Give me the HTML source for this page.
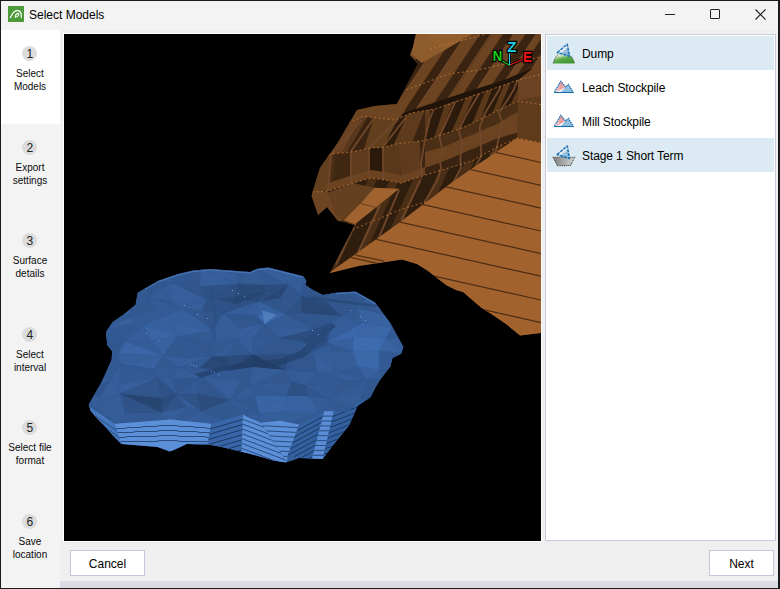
<!DOCTYPE html>
<html><head><meta charset="utf-8">
<style>
*{margin:0;padding:0;box-sizing:border-box;}
html,body{width:780px;height:589px;overflow:hidden;background:#f0f0f0;font-family:"Liberation Sans",sans-serif;}
.abs{position:absolute;}
#win{position:absolute;left:0;top:0;width:780px;height:589px;background:#efefef;}
#title{left:0;top:0;width:780px;height:30px;background:#f3f3f3;}
#ttext{left:29px;top:8px;font-size:12px;line-height:14px;color:#000;}
#side1{left:1px;top:30px;width:59px;height:94px;background:#fff;}
.step{position:absolute;left:2px;width:56px;text-align:center;font-size:10px;line-height:13px;color:#0a0a0a;}
.circ{position:absolute;left:22.3px;width:15px;height:15px;border-radius:50%;background:#dcdcdc;font-size:12px;line-height:16.5px;text-align:center;color:#222;}
#vp{left:64px;top:34px;width:477px;height:507px;background:#000;overflow:hidden;}
#list{left:545px;top:34px;width:231px;height:507px;background:#fff;border:1px solid #c9c9dc;}
.item{position:absolute;left:1px;width:227px;height:34px;font-size:12px;line-height:14px;letter-spacing:-0.1px;color:#000;}
.item.sel{background:#dcebf3;}
.item span{position:absolute;left:35px;top:11px;}
.btn{position:absolute;top:550px;height:26px;background:#fff;border:1px solid #c6c6da;font-size:12px;text-align:center;line-height:24px;padding-top:0.7px;color:#000;}
#strip{left:60px;top:581px;width:718px;height:7px;background:#dadce6;}
</style></head><body>
<svg width="0" height="0" style="position:absolute"><defs>
<linearGradient id="gtri" x1="0" y1="0" x2="0.8" y2="1"><stop offset="0.45" stop-color="#ffffff"/><stop offset="0.7" stop-color="#8cbad8"/></linearGradient>
<linearGradient id="ggreen" x1="0" y1="0" x2="0.6" y2="1"><stop offset="0.2" stop-color="#d8ebc8"/><stop offset="0.55" stop-color="#5aa848"/><stop offset="1" stop-color="#3e9a2e"/></linearGradient>
<linearGradient id="gpink" x1="0" y1="0" x2="1" y2="0"><stop offset="0" stop-color="#fbe6e6"/><stop offset="0.6" stop-color="#e89a9a"/><stop offset="1" stop-color="#eaa8a8"/></linearGradient>
<linearGradient id="ggray" x1="0" y1="0" x2="1" y2="0"><stop offset="0" stop-color="#808080"/><stop offset="0.5" stop-color="#a8a8a8"/><stop offset="1" stop-color="#d8d8d8"/></linearGradient>
</defs></svg>
<div id="win">
<div id="title" class="abs"></div>
<div class="abs" style="left:0;top:0;width:780px;height:1px;background:#1a1a1a"></div>
<svg class="abs" style="left:8px;top:6px" width="16" height="16" viewBox="8 6 16 16"><rect x="8" y="6" width="16" height="16" fill="#4c9a3a"/><path d="M10.4 17.6 Q13.5 11 16.8 10.6 Q20.6 10.3 21.2 14 L21.3 17.6" fill="none" stroke="#fff" stroke-width="1.2" stroke-linecap="round"/><path d="M15.3 17.2 Q15.2 14.2 17.6 13.4 Q19.3 13.4 18.6 15.2 Q17.6 17 15.3 17.2 Z" fill="none" stroke="#fff" stroke-width="1.1"/></svg>
<div id="ttext" class="abs">Select Models</div>
<div class="abs" style="left:665px;top:14px;width:10px;height:1px;background:#222"></div>
<div class="abs" style="left:710px;top:9px;width:10px;height:10px;border:1px solid #222;border-radius:1px"></div>
<svg class="abs" style="left:755px;top:9px" width="11" height="11"><path d="M0.5 0.5L10.5 10.5M10.5 0.5L0.5 10.5" stroke="#222" stroke-width="1.1"/></svg>

<div class="abs" style="left:1px;top:30px;width:59px;height:558px;background:#f3f3f3"></div>
<div id="side1" class="abs"></div>
<div class="abs" style="left:63px;top:33px;width:479px;height:509px;background:#fff"></div>
<div class="circ" style="top:46.0px">1</div>
<div class="step" style="top:67.0px">Select<br>Models</div>
<div class="circ" style="top:139.6px">2</div>
<div class="step" style="top:160.6px">Export<br>settings</div>
<div class="circ" style="top:233.2px">3</div>
<div class="step" style="top:254.2px">Surface<br>details</div>
<div class="circ" style="top:326.8px">4</div>
<div class="step" style="top:347.8px">Select<br>interval</div>
<div class="circ" style="top:420.4px">5</div>
<div class="step" style="top:441.4px">Select file<br>format</div>
<div class="circ" style="top:514.0px">6</div>
<div class="step" style="top:535.0px">Save<br>location</div>

<div id="vp" class="abs"><svg width="477" height="507" viewBox="64 34 477 507" style="position:absolute;left:0;top:0">
<clipPath id="cb"><polygon points="416.0,34.0 541.0,34.0 541.0,333.0 520.0,335.5 506.0,324.0 492.0,314.5 481.0,307.5 463.0,292.0 456.0,290.0 446.0,285.0 428.0,271.0 417.0,264.0 402.0,259.6 358.5,266.0 330.0,273.0 355.0,225.0 338.0,221.0 327.0,207.0 318.0,215.0 311.5,196.0 320.0,168.0 338.0,142.5 350.0,122.0 357.0,110.0 375.0,106.0 397.0,104.0 418.0,64.0 410.0,55.0 413.0,47.0"/></clipPath>
<polygon points="416.0,34.0 541.0,34.0 541.0,333.0 520.0,335.5 506.0,324.0 492.0,314.5 481.0,307.5 463.0,292.0 456.0,290.0 446.0,285.0 428.0,271.0 417.0,264.0 402.0,259.6 358.5,266.0 330.0,273.0 355.0,225.0 338.0,221.0 327.0,207.0 318.0,215.0 311.5,196.0 320.0,168.0 338.0,142.5 350.0,122.0 357.0,110.0 375.0,106.0 397.0,104.0 418.0,64.0 410.0,55.0 413.0,47.0" fill="#5c391b" />
<g clip-path="url(#cb)">
<polygon points="280.0,20.0 560.0,20.0 560.0,69.8 541.0,74.4 518.0,80.0 475.0,95.2 435.6,108.9 412.0,112.8 394.0,120.0 379.9,118.2 363.8,116.4 351.3,121.7 340.0,126.0 280.0,148.8" fill="#6c4421" />
<clipPath id="s4"><polygon points="280.0,20.0 560.0,20.0 560.0,69.8 541.0,74.4 518.0,80.0 475.0,95.2 435.6,108.9 412.0,112.8 394.0,120.0 379.9,118.2 363.8,116.4 351.3,121.7 340.0,126.0 280.0,148.8"/></clipPath>
<g clip-path="url(#s4)">
<polygon points="418.0,20.0 429.0,20.0 242.3,300.0 231.3,300.0" fill="#3a2411" />
<polygon points="442.0,20.0 453.0,20.0 266.3,300.0 255.3,300.0" fill="#3a2411" />
<polygon points="464.8,20.0 475.8,20.0 289.1,300.0 278.1,300.0" fill="#3a2411" />
<polygon points="489.6,20.0 501.6,20.0 314.9,300.0 302.9,300.0" fill="#3a2411" />
<polygon points="512.3,20.0 522.8,20.0 336.1,300.0 325.6,300.0" fill="#3a2411" />
<polygon points="535.0,20.0 545.5,20.0 358.8,300.0 348.3,300.0" fill="#3a2411" />
<polygon points="553.6,20.0 564.1,20.0 377.4,300.0 366.9,300.0" fill="#3a2411" />
<polygon points="578.4,20.0 588.9,20.0 402.2,300.0 391.7,300.0" fill="#3a2411" />
<polygon points="601.0,20.0 611.0,20.0 424.3,300.0 414.3,300.0" fill="#3a2411" />
</g>
<polygon points="400.0,114.0 460.0,94.0 502.6,80.5 541.0,65.0 541.0,72.0 502.6,86.0 475.0,94.5 435.6,108.0 405.0,117.0" fill="#1f130a" />
<polygon points="280.0,148.8 340.0,126.0 351.3,121.7 363.8,116.4 379.9,118.2 394.0,120.0 412.0,112.8 435.6,108.9 475.0,95.2 518.0,80.0 541.0,74.4 560.0,69.8 560.0,107.6 541.0,104.6 518.0,101.0 498.0,110.4 466.3,126.3 425.0,140.5 396.0,144.0 381.6,147.6 372.7,147.6 351.3,152.0 331.7,153.8 320.0,158.0 280.0,172.4" fill="#5a381a" />
<clipPath id="s18"><polygon points="280.0,148.8 340.0,126.0 351.3,121.7 363.8,116.4 379.9,118.2 394.0,120.0 412.0,112.8 435.6,108.9 475.0,95.2 518.0,80.0 541.0,74.4 560.0,69.8 560.0,107.6 541.0,104.6 518.0,101.0 498.0,110.4 466.3,126.3 425.0,140.5 396.0,144.0 381.6,147.6 372.7,147.6 351.3,152.0 331.7,153.8 320.0,158.0 280.0,172.4"/></clipPath>
<g clip-path="url(#s18)">
<polygon points="416.7,20.0 428.7,20.0 264.0,300.0 252.0,300.0" fill="#2f1d0d" />
<polygon points="440.7,20.0 452.7,20.0 288.0,300.0 276.0,300.0" fill="#2f1d0d" />
<polygon points="468.7,20.0 480.7,20.0 316.0,300.0 304.0,300.0" fill="#2f1d0d" />
<polygon points="492.7,20.0 504.7,20.0 340.0,300.0 328.0,300.0" fill="#2f1d0d" />
<polygon points="514.7,20.0 526.7,20.0 362.0,300.0 350.0,300.0" fill="#2f1d0d" />
<polygon points="536.7,20.0 548.7,20.0 384.0,300.0 372.0,300.0" fill="#2f1d0d" />
<polygon points="558.7,20.0 569.7,20.0 405.0,300.0 394.0,300.0" fill="#2f1d0d" />
<polygon points="580.7,20.0 590.7,20.0 426.0,300.0 416.0,300.0" fill="#2f1d0d" />
</g>
<polygon points="280.0,172.4 320.0,158.0 331.7,153.8 351.3,152.0 372.7,147.6 381.6,147.6 396.0,144.0 425.0,140.5 466.3,126.3 498.0,110.4 518.0,101.0 541.0,104.6 560.0,107.6 560.0,147.1 541.0,143.0 518.0,138.0 498.0,146.5 472.0,160.9 443.3,169.5 415.5,178.0 401.3,183.2 388.8,180.6 371.0,178.0 349.6,184.0 328.0,191.3 312.0,192.0 280.0,193.4" fill="#5e3b1c" />
<clipPath id="s30"><polygon points="280.0,172.4 320.0,158.0 331.7,153.8 351.3,152.0 372.7,147.6 381.6,147.6 396.0,144.0 425.0,140.5 466.3,126.3 498.0,110.4 518.0,101.0 541.0,104.6 560.0,107.6 560.0,147.1 541.0,143.0 518.0,138.0 498.0,146.5 472.0,160.9 443.3,169.5 415.5,178.0 401.3,183.2 388.8,180.6 371.0,178.0 349.6,184.0 328.0,191.3 312.0,192.0 280.0,193.4"/></clipPath>
<g clip-path="url(#s30)">
<polygon points="386.2,20.0 400.2,20.0 330.2,300.0 316.2,300.0" fill="#3b2511" />
<polygon points="404.2,20.0 413.2,20.0 343.2,300.0 334.2,300.0" fill="#3b2511" />
<polygon points="434.2,20.0 443.2,20.0 373.2,300.0 364.2,300.0" fill="#3b2511" />
<polygon points="457.2,20.0 466.2,20.0 396.2,300.0 387.2,300.0" fill="#3b2511" />
<polygon points="477.2,20.0 486.2,20.0 416.2,300.0 407.2,300.0" fill="#3b2511" />
<polygon points="497.2,20.0 506.2,20.0 436.2,300.0 427.2,300.0" fill="#3b2511" />
<polygon points="517.2,20.0 526.2,20.0 456.2,300.0 447.2,300.0" fill="#3b2511" />
<polygon points="536.2,20.0 545.2,20.0 475.2,300.0 466.2,300.0" fill="#3b2511" />
</g>
<clipPath id="clobe"><polygon points="280.0,20.0 425.0,20.0 425.0,300.0 280.0,300.0"/></clipPath>
<g clip-path="url(#clobe)">
<polygon points="300.0,141.2 362.0,117.2 342.0,152.9 300.0,165.2" fill="#6a4221" />
<polygon points="362.0,117.2 368.0,116.9 347.0,152.4 342.0,152.9" fill="#5a381b" />
<polygon points="368.0,116.9 374.0,117.5 364.0,149.4 347.0,152.4" fill="#3a2411" />
<polygon points="374.0,117.5 398.4,118.2 383.1,147.2 364.0,149.4" fill="#62401d" />
<polygon points="398.4,118.2 407.6,114.6 393.8,144.6 383.1,147.2" fill="#2e1c0c" />
<polygon points="407.6,114.6 425.0,110.7 412.2,142.0 393.8,144.6" fill="#5e3b1c" />
<polygon points="425.0,110.7 440.0,107.4 425.0,140.5 412.2,142.0" fill="#3a2411" />
<polygon points="300.0,165.2 331.0,154.1 328.0,191.3 300.0,192.5" fill="#62401e" />
<polygon points="331.0,154.1 335.0,153.5 332.0,189.9 328.0,191.3" fill="#4a2e15" />
<polygon points="335.0,153.5 351.0,152.0 351.0,183.6 332.0,189.9" fill="#3f2712" />
<polygon points="351.0,152.0 369.0,148.4 369.0,178.6 351.0,183.6" fill="#5e3b1c" />
<polygon points="369.0,148.4 383.0,147.2 383.0,179.8 369.0,178.6" fill="#2a1a0b" />
<polygon points="383.0,147.2 398.4,143.7 401.5,183.1 383.0,179.8" fill="#5a381b" />
<polygon points="398.4,143.7 419.8,141.1 421.3,176.2 401.5,183.1" fill="#5e3b1c" />
<polygon points="419.8,141.1 440.0,135.3 440.0,170.5 421.3,176.2" fill="#3a2411" />
</g>
<clipPath id="cledge"><polygon points="326.0,20.0 425.0,20.0 425.0,300.0 326.0,300.0"/></clipPath>
<g clip-path="url(#cledge)">
<polygon points="280.0,185.4 312.0,184.0 328.0,183.3 349.6,176.0 371.0,170.0 388.8,172.6 401.3,175.2 415.5,170.0 443.3,161.5 472.0,152.9 498.0,138.5 518.0,130.0 541.0,135.0 560.0,139.1 560.0,147.1 541.0,143.0 518.0,138.0 498.0,146.5 472.0,160.9 443.3,169.5 415.5,178.0 401.3,183.2 388.8,180.6 371.0,178.0 349.6,184.0 328.0,191.3 312.0,192.0 280.0,193.4" fill="#6b4321" />
</g>
<clipPath id="cright"><polygon points="425.0,20.0 560.0,20.0 560.0,300.0 425.0,300.0"/></clipPath>
<g clip-path="url(#cright)">
<polygon points="409.0,114.0 422.6,111.0 417.4,141.4 405.0,142.9" fill="#2c1b0c" />
<polygon points="422.6,111.0 431.0,109.7 425.0,140.5 417.4,141.4" fill="#5a3819" />
<polygon points="431.0,109.7 444.6,105.8 434.3,137.3 425.0,140.5" fill="#2c1b0c" />
<polygon points="444.6,105.8 453.0,102.8 440.0,135.3 434.3,137.3" fill="#5a3819" />
<polygon points="453.0,102.8 466.0,98.3 451.8,131.3 440.0,135.3" fill="#2c1b0c" />
<polygon points="466.0,98.3 474.0,95.5 459.0,128.8 451.8,131.3" fill="#5a3819" />
<polygon points="474.0,95.5 485.2,91.6 472.6,123.1 459.0,128.8" fill="#2c1b0c" />
<polygon points="485.2,91.6 492.0,89.2 481.0,118.9 472.6,123.1" fill="#5a3819" />
<polygon points="492.0,89.2 503.8,85.0 492.2,113.3 481.0,118.9" fill="#2c1b0c" />
<polygon points="503.8,85.0 511.0,82.5 499.0,109.9 492.2,113.3" fill="#5a3819" />
<polygon points="511.0,82.5 522.8,78.8 510.2,104.7 499.0,109.9" fill="#2c1b0c" />
<polygon points="522.8,78.8 530.0,77.1 517.0,101.5 510.2,104.7" fill="#5a3819" />
<polygon points="530.0,77.1 542.4,74.1 529.4,102.8 517.0,101.5" fill="#2c1b0c" />
<polygon points="542.4,74.1 550.0,72.2 537.0,104.0 529.4,102.8" fill="#5a3819" />
<polygon points="280.0,172.4 320.0,158.0 331.7,153.8 351.3,152.0 372.7,147.6 381.6,147.6 396.0,144.0 425.0,140.5 466.3,126.3 498.0,110.4 518.0,101.0 541.0,104.6 560.0,107.6 560.0,100.0 516.2,112.4 495.6,124.8 442.0,147.5 400.6,157.8 380.0,163.0" fill="#4a2e15" />
<polygon points="380.0,163.0 400.6,157.8 442.0,147.5 495.6,124.8 516.2,112.4 560.0,100.0 560.0,125.0 516.2,133.0 495.6,139.2 442.0,162.0 400.6,176.4 380.0,182.0" fill="#6b4321" />
<polygon points="380.0,182.0 400.6,176.4 442.0,162.0 495.6,139.2 516.2,133.0 560.0,125.0 560.0,147.1 541.0,143.0 518.0,138.0 498.0,146.5 472.0,160.9 443.3,169.5 415.5,178.0 401.3,183.2 388.8,180.6 371.0,178.0 349.6,184.0 328.0,191.3 312.0,192.0 280.0,193.4" fill="#3a2411" />
</g>
<polygon points="280.0,193.4 312.0,192.0 328.0,191.3 349.6,184.0 371.0,178.0 388.8,180.6 401.3,183.2 415.5,178.0 443.3,169.5 472.0,160.9 498.0,146.5 518.0,138.0 541.0,143.0 560.0,147.1 560.0,146.0 541.0,143.0 517.0,138.0 455.0,180.0 401.2,221.3 330.0,272.3 280.0,308.0" fill="#2f1d0d" />
<clipPath id="s84"><polygon points="280.0,193.4 312.0,192.0 328.0,191.3 349.6,184.0 371.0,178.0 388.8,180.6 401.3,183.2 415.5,178.0 443.3,169.5 472.0,160.9 498.0,146.5 518.0,138.0 541.0,143.0 560.0,147.1 560.0,146.0 541.0,143.0 517.0,138.0 455.0,180.0 401.2,221.3 330.0,272.3 280.0,308.0"/></clipPath>
<g clip-path="url(#s84)">
<polygon points="440.5,20.0 449.5,20.0 322.2,300.0 313.2,300.0" fill="#4a2e15" />
<polygon points="462.5,20.0 471.5,20.0 344.2,300.0 335.2,300.0" fill="#4a2e15" />
<polygon points="485.5,20.0 494.5,20.0 367.2,300.0 358.2,300.0" fill="#4a2e15" />
<polygon points="507.5,20.0 516.5,20.0 389.2,300.0 380.2,300.0" fill="#4a2e15" />
<polygon points="529.5,20.0 538.5,20.0 411.2,300.0 402.2,300.0" fill="#4a2e15" />
<polygon points="551.5,20.0 560.5,20.0 433.2,300.0 424.2,300.0" fill="#4a2e15" />
<polygon points="573.5,20.0 582.5,20.0 455.2,300.0 446.2,300.0" fill="#4a2e15" />
<polygon points="595.5,20.0 604.5,20.0 477.2,300.0 468.2,300.0" fill="#4a2e15" />
</g>
<clipPath id="ccol"><polygon points="280.0,148.8 340.0,126.0 351.3,121.7 363.8,116.4 379.9,118.2 394.0,120.0 412.0,112.8 435.6,108.9 475.0,95.2 518.0,80.0 541.0,74.4 560.0,69.8 560.0,146.0 541.0,143.0 517.0,138.0 455.0,180.0 401.2,221.3 330.0,272.3 280.0,308.0"/></clipPath>
<g clip-path="url(#ccol)">
<polyline points="335.8,264.6 355.0,224.2" fill="none" stroke="#70472a" stroke-width="1.8" />
<polyline points="357.0,255.0 380.0,205.0" fill="none" stroke="#70472a" stroke-width="1.8" />
<polyline points="378.0,239.6 399.2,189.6" fill="none" stroke="#70472a" stroke-width="1.8" />
<polyline points="401.2,220.4 420.4,180.0" fill="none" stroke="#70472a" stroke-width="1.8" />
<polyline points="424.2,203.0 437.7,180.0" fill="none" stroke="#70472a" stroke-width="1.8" />
<polyline points="421.6,175.0 421.0,164.0 424.8,140.0 429.7,119.0 439.4,96.5 450.0,70.0" fill="none" stroke="#70472a" stroke-width="1.8" />
<polyline points="437.7,180.0 441.0,168.0 439.4,157.7 442.6,151.3 439.4,136.8 449.0,115.8 457.0,98.0 462.0,90.0 472.0,60.0" fill="none" stroke="#70472a" stroke-width="1.8" />
<polyline points="452.0,185.0 461.0,168.0 460.3,157.7 462.0,143.2 458.7,130.3 466.8,114.2 476.5,98.0 481.3,90.0 492.0,60.0" fill="none" stroke="#70472a" stroke-width="1.8" />
<polyline points="473.2,170.6 481.3,156.0 479.7,127.1 484.5,114.2 494.2,98.0 499.0,90.0 510.0,60.0" fill="none" stroke="#70472a" stroke-width="1.8" />
<polyline points="490.0,155.0 495.8,151.3 502.3,122.3 499.0,112.6 508.7,98.0 513.5,90.0 525.0,62.0" fill="none" stroke="#70472a" stroke-width="1.8" />
<polyline points="362.0,120.0 331.0,155.0 328.0,191.0" fill="none" stroke="#70472a" stroke-width="1.8" />
<polyline points="374.0,118.0 351.0,151.0 351.0,183.0" fill="none" stroke="#70472a" stroke-width="1.8" />
<polyline points="398.4,119.0 369.0,148.0 369.0,177.0" fill="none" stroke="#70472a" stroke-width="1.8" />
<polyline points="407.0,116.0 383.0,147.0 383.0,180.0" fill="none" stroke="#70472a" stroke-width="1.8" />
</g>
<clipPath id="cr01"><polygon points="280.0,20.0 560.0,20.0 560.0,57.0 541.0,65.0 502.6,80.5 460.0,94.0 400.0,114.0 280.0,130.0"/></clipPath>
<g clip-path="url(#cr01)">
<polyline points="429.0,20.0 342.3,150.0" fill="none" stroke="#74492a" stroke-width="1.2" />
<polyline points="453.0,20.0 366.3,150.0" fill="none" stroke="#74492a" stroke-width="1.2" />
<polyline points="475.8,20.0 389.1,150.0" fill="none" stroke="#74492a" stroke-width="1.2" />
<polyline points="500.6,20.0 413.9,150.0" fill="none" stroke="#74492a" stroke-width="1.2" />
<polyline points="523.3,20.0 436.6,150.0" fill="none" stroke="#74492a" stroke-width="1.2" />
<polyline points="546.0,20.0 459.3,150.0" fill="none" stroke="#74492a" stroke-width="1.2" />
<polyline points="564.6,20.0 477.9,150.0" fill="none" stroke="#74492a" stroke-width="1.2" />
<polyline points="589.4,20.0 502.7,150.0" fill="none" stroke="#74492a" stroke-width="1.2" />
<polyline points="612.0,20.0 525.3,150.0" fill="none" stroke="#74492a" stroke-width="1.2" />
</g>
<polygon points="350.0,122.0 357.0,110.0 375.0,106.0 397.0,104.0 412.0,92.0 404.0,112.8 394.0,120.0 379.9,118.2 363.8,116.4 351.3,121.7 340.0,126.0" fill="#6e4522" />
<polygon points="343.5,220.4 358.8,203.0 374.2,187.7 399.2,188.7 355.0,224.2" fill="#a0632f" />
<polygon points="358.8,203.0 378.0,208.0" fill="#5a3719" />
<polyline points="358.8,203.0 378.0,208.0" fill="none" stroke="#6a4220" stroke-width="1" />
<polygon points="328.8,192.4 352.5,183.0 374.2,187.7 362.0,202.0 343.5,220.4 336.0,214.0" fill="#654020" />
<polygon points="318.0,215.0 311.5,196.0 312.0,190.0 328.8,192.4 336.0,214.0 343.5,220.4 338.0,221.0" fill="#6e4523" />
<clipPath id="cf"><polygon points="330.0,272.3 401.2,221.3 455.0,180.0 517.0,138.0 541.0,143.0 541.0,340.0 300.0,340.0"/></clipPath>
<polygon points="330.0,272.3 401.2,221.3 455.0,180.0 517.0,138.0 541.0,143.0 541.0,340.0 300.0,340.0" fill="#a2622e" />
<g clip-path="url(#cf)">
<polyline points="300.0,108.6 541.0,162.5" fill="none" stroke="#4c2d13" stroke-width="1.2" />
<polyline points="300.0,131.4 541.0,185.3" fill="none" stroke="#4c2d13" stroke-width="1.2" />
<polyline points="300.0,154.2 541.0,208.1" fill="none" stroke="#4c2d13" stroke-width="1.2" />
<polyline points="300.0,177.1 541.0,231.0" fill="none" stroke="#4c2d13" stroke-width="1.2" />
<polyline points="300.0,199.7 541.0,253.6" fill="none" stroke="#4c2d13" stroke-width="1.2" />
<polyline points="300.0,222.3 541.0,276.2" fill="none" stroke="#4c2d13" stroke-width="1.2" />
<polyline points="300.0,246.1 541.0,300.0" fill="none" stroke="#4c2d13" stroke-width="1.2" />
<polyline points="300.0,268.7 541.0,322.6" fill="none" stroke="#4c2d13" stroke-width="1.2" />
<polyline points="355.0,255.0 384.0,261.0" fill="none" stroke="#5e3919" stroke-width="1.3" />
</g>
<polygon points="518.0,101.0 541.0,96.0 541.0,143.0 517.0,138.0" fill="#5e3b1b" />
<polygon points="518.0,80.0 541.0,62.0 541.0,96.0 518.0,101.0" fill="#6b4322" />
<polygon points="414.0,34.0 472.0,34.0 443.0,51.0 421.8,63.0 411.0,54.0 413.0,47.0" fill="#8d5b2c" />
<polygon points="425.0,34.0 472.0,34.0 443.0,50.8" fill="#966030" opacity="0.6"/>
<polyline points="398.0,93.0 449.3,73.8 475.0,70.7 500.0,65.0 541.0,57.0" fill="none" stroke="#c07b3c" stroke-width="1" stroke-dasharray="2 2.5" opacity="0.8"/>
<polyline points="340.0,126.0 351.3,121.7 363.8,116.4 379.9,118.2 394.0,120.0 412.0,112.8 435.6,108.9 475.0,95.2 518.0,80.0 541.0,74.4" fill="none" stroke="#c07b3c" stroke-width="1" stroke-dasharray="2 2.5" opacity="0.8"/>
<polyline points="320.0,158.0 331.7,153.8 351.3,152.0 372.7,147.6 381.6,147.6 396.0,144.0 425.0,140.5 466.3,126.3 498.0,110.4 518.0,101.0 541.0,104.6" fill="none" stroke="#c07b3c" stroke-width="1" stroke-dasharray="2 2.5" opacity="0.8"/>
<polyline points="312.0,192.0 328.0,191.3 349.6,184.0 371.0,178.0 388.8,180.6 401.3,183.2 415.5,178.0 443.3,169.5 472.0,160.9 498.0,146.5 518.0,138.0 541.0,143.0" fill="none" stroke="#c07b3c" stroke-width="1" stroke-dasharray="2 2.5" opacity="0.8"/>
<polyline points="345.0,234.0 354.4,228.8 401.6,209.2 426.0,202.0" fill="none" stroke="#c07b3c" stroke-width="1" stroke-dasharray="2 2.5" opacity="0.8"/>
<polyline points="430.0,49.0 475.0,37.0 500.0,30.0" fill="none" stroke="#c07b3c" stroke-width="1" stroke-dasharray="2 2.5" opacity="0.8"/>
</g>
<clipPath id="cbl"><polygon points="210.7,269.0 250.0,272.0 257.4,268.7 268.3,267.6 303.2,276.3 306.4,280.7 305.4,285.0 312.0,289.4 322.8,294.9 335.9,292.7 355.5,291.6 375.0,302.5 390.3,323.0 396.9,335.2 403.4,347.0 401.2,353.7 392.5,358.0 390.3,366.8 385.0,373.3 379.4,380.7 375.0,388.3 370.7,397.0 357.6,405.8 349.0,425.4 340.2,436.3 331.5,447.1 322.8,459.1 298.8,458.0 285.8,462.4 272.7,460.2 250.0,453.7 221.6,447.0 210.7,445.0 186.8,443.9 172.6,450.4 169.3,451.5 157.3,447.1 121.4,443.9 112.7,435.2 106.1,427.5 97.4,418.8 90.9,411.2 88.7,404.7 94.2,394.9 101.8,381.8 111.6,360.0 112.2,351.5 107.2,345.0 106.0,332.0 112.7,322.0 123.6,314.5 135.6,304.7 137.7,292.7 145.4,288.3 158.4,280.7 178.0,274.0 193.3,270.5"/></clipPath>
<polygon points="210.7,269.0 250.0,272.0 257.4,268.7 268.3,267.6 303.2,276.3 306.4,280.7 305.4,285.0 312.0,289.4 322.8,294.9 335.9,292.7 355.5,291.6 375.0,302.5 390.3,323.0 396.9,335.2 403.4,347.0 401.2,353.7 392.5,358.0 390.3,366.8 385.0,373.3 379.4,380.7 375.0,388.3 370.7,397.0 357.6,405.8 349.0,425.4 340.2,436.3 331.5,447.1 322.8,459.1 298.8,458.0 285.8,462.4 272.7,460.2 250.0,453.7 221.6,447.0 210.7,445.0 186.8,443.9 172.6,450.4 169.3,451.5 157.3,447.1 121.4,443.9 112.7,435.2 106.1,427.5 97.4,418.8 90.9,411.2 88.7,404.7 94.2,394.9 101.8,381.8 111.6,360.0 112.2,351.5 107.2,345.0 106.0,332.0 112.7,322.0 123.6,314.5 135.6,304.7 137.7,292.7 145.4,288.3 158.4,280.7 178.0,274.0 193.3,270.5" fill="#3862a0" />
<g clip-path="url(#cbl)">
<polygon points="72.5,252.9 103.0,252.1 93.2,267.4" fill="#345c97" stroke="#31568d" stroke-width="0.3"/>
<polygon points="72.5,252.9 93.2,267.4 79.0,266.2" fill="#355d98" stroke="#325890" stroke-width="0.3"/>
<polygon points="79.0,266.2 93.2,267.4 76.7,282.8" fill="#31568d" stroke="#325891" stroke-width="0.3"/>
<polygon points="93.2,267.4 105.6,283.3 76.7,282.8" fill="#355d98" stroke="#325890" stroke-width="0.3"/>
<polygon points="76.7,282.8 105.6,283.3 98.3,298.8" fill="#355d98" stroke="#365f9c" stroke-width="0.3"/>
<polygon points="76.7,282.8 98.3,298.8 67.2,298.1" fill="#345b94" stroke="#335992" stroke-width="0.3"/>
<polygon points="67.2,298.1 98.3,298.8 66.7,311.4" fill="#335a94" stroke="#355c97" stroke-width="0.3"/>
<polygon points="98.3,298.8 101.1,310.2 66.7,311.4" fill="#355d99" stroke="#345c96" stroke-width="0.3"/>
<polygon points="66.7,311.4 101.1,310.2 107.9,327.8" fill="#345c97" stroke="#31568e" stroke-width="0.3"/>
<polygon points="66.7,311.4 107.9,327.8 67.4,322.3" fill="#32578f" stroke="#325890" stroke-width="0.3"/>
<polygon points="67.4,322.3 107.9,327.8 74.5,342.9" fill="#355d98" stroke="#325991" stroke-width="0.3"/>
<polygon points="107.9,327.8 96.9,340.7 74.5,342.9" fill="#345b95" stroke="#31568c" stroke-width="0.3"/>
<polygon points="74.5,342.9 96.9,340.7 102.5,357.4" fill="#31568d" stroke="#325891" stroke-width="0.3"/>
<polygon points="74.5,342.9 102.5,357.4 68.5,351.5" fill="#355c97" stroke="#355d97" stroke-width="0.3"/>
<polygon points="68.5,351.5 102.5,357.4 78.5,372.0" fill="#355c97" stroke="#325991" stroke-width="0.3"/>
<polygon points="102.5,357.4 106.6,366.1 78.5,372.0" fill="#345b95" stroke="#335a94" stroke-width="0.3"/>
<polygon points="78.5,372.0 106.6,366.1 111.6,378.6" fill="#335a94" stroke="#31578e" stroke-width="0.3"/>
<polygon points="78.5,372.0 111.6,378.6 77.5,381.1" fill="#365e9b" stroke="#32588f" stroke-width="0.3"/>
<polygon points="77.5,381.1 111.6,378.6 85.5,391.9" fill="#365f9c" stroke="#365f9b" stroke-width="0.3"/>
<polygon points="111.6,378.6 100.4,398.3 85.5,391.9" fill="#31568d" stroke="#335a94" stroke-width="0.3"/>
<polygon points="85.5,391.9 100.4,398.3 95.0,409.9" fill="#355e99" stroke="#365f9c" stroke-width="0.3"/>
<polygon points="85.5,391.9 95.0,409.9 83.2,408.1" fill="#335a93" stroke="#325891" stroke-width="0.3"/>
<polygon points="83.2,408.1 95.0,409.9 68.9,420.6" fill="#325890" stroke="#365f9b" stroke-width="0.3"/>
<polygon points="95.0,409.9 92.8,425.5 68.9,420.6" fill="#325890" stroke="#345b96" stroke-width="0.3"/>
<polygon points="68.9,420.6 92.8,425.5 107.3,438.7" fill="#32578f" stroke="#345b95" stroke-width="0.3"/>
<polygon points="68.9,420.6 107.3,438.7 72.2,440.8" fill="#365f9c" stroke="#32578e" stroke-width="0.3"/>
<polygon points="72.2,440.8 107.3,438.7 69.6,452.7" fill="#355e99" stroke="#345b94" stroke-width="0.3"/>
<polygon points="107.3,438.7 109.5,450.3 69.6,452.7" fill="#365e9a" stroke="#355d98" stroke-width="0.3"/>
<polygon points="69.6,452.7 109.5,450.3 105.9,466.8" fill="#325890" stroke="#365f9b" stroke-width="0.3"/>
<polygon points="69.6,452.7 105.9,466.8 78.8,464.9" fill="#345b94" stroke="#31568d" stroke-width="0.3"/>
<polygon points="103.0,252.1 129.6,255.6 93.2,267.4" fill="#31568c" stroke="#345b94" stroke-width="0.3"/>
<polygon points="129.6,255.6 134.8,274.0 93.2,267.4" fill="#335a94" stroke="#325991" stroke-width="0.3"/>
<polygon points="93.2,267.4 134.8,274.0 127.5,285.5" fill="#32578f" stroke="#335992" stroke-width="0.3"/>
<polygon points="93.2,267.4 127.5,285.5 105.6,283.3" fill="#335991" stroke="#355e9a" stroke-width="0.3"/>
<polygon points="105.6,283.3 127.5,285.5 98.3,298.8" fill="#31568c" stroke="#355d98" stroke-width="0.3"/>
<polygon points="127.5,285.5 119.2,299.8 98.3,298.8" fill="#355e9a" stroke="#31578e" stroke-width="0.3"/>
<polygon points="98.3,298.8 119.2,299.8 130.9,316.4" fill="#365f9b" stroke="#355d98" stroke-width="0.3"/>
<polygon points="98.3,298.8 130.9,316.4 101.1,310.2" fill="#365f9b" stroke="#325991" stroke-width="0.3"/>
<polygon points="101.1,310.2 130.9,316.4 107.9,327.8" fill="#335992" stroke="#335a93" stroke-width="0.3"/>
<polygon points="130.9,316.4 134.4,324.1 107.9,327.8" fill="#36609c" stroke="#345c96" stroke-width="0.3"/>
<polygon points="107.9,327.8 134.4,324.1 125.7,341.5" fill="#335992" stroke="#335a93" stroke-width="0.3"/>
<polygon points="107.9,327.8 125.7,341.5 96.9,340.7" fill="#325891" stroke="#31568d" stroke-width="0.3"/>
<polygon points="96.9,340.7 125.7,341.5 102.5,357.4" fill="#31578e" stroke="#355e9a" stroke-width="0.3"/>
<polygon points="125.7,341.5 118.5,353.7 102.5,357.4" fill="#335991" stroke="#365f9c" stroke-width="0.3"/>
<polygon points="102.5,357.4 118.5,353.7 121.4,364.6" fill="#325890" stroke="#325891" stroke-width="0.3"/>
<polygon points="102.5,357.4 121.4,364.6 106.6,366.1" fill="#345b94" stroke="#32588f" stroke-width="0.3"/>
<polygon points="106.6,366.1 121.4,364.6 111.6,378.6" fill="#335992" stroke="#365f9c" stroke-width="0.3"/>
<polygon points="121.4,364.6 119.2,384.4 111.6,378.6" fill="#365e9a" stroke="#355e99" stroke-width="0.3"/>
<polygon points="111.6,378.6 119.2,384.4 120.6,393.7" fill="#345c96" stroke="#365f9b" stroke-width="0.3"/>
<polygon points="111.6,378.6 120.6,393.7 100.4,398.3" fill="#365f9b" stroke="#345b95" stroke-width="0.3"/>
<polygon points="100.4,398.3 120.6,393.7 95.0,409.9" fill="#355d98" stroke="#31568d" stroke-width="0.3"/>
<polygon points="120.6,393.7 125.8,413.3 95.0,409.9" fill="#355d98" stroke="#335a93" stroke-width="0.3"/>
<polygon points="95.0,409.9 125.8,413.3 119.6,423.5" fill="#355d98" stroke="#345c97" stroke-width="0.3"/>
<polygon points="95.0,409.9 119.6,423.5 92.8,425.5" fill="#325991" stroke="#31568d" stroke-width="0.3"/>
<polygon points="92.8,425.5 119.6,423.5 107.3,438.7" fill="#365f9b" stroke="#31578e" stroke-width="0.3"/>
<polygon points="119.6,423.5 129.0,441.5 107.3,438.7" fill="#335a94" stroke="#335992" stroke-width="0.3"/>
<polygon points="107.3,438.7 129.0,441.5 134.4,455.3" fill="#325991" stroke="#355d98" stroke-width="0.3"/>
<polygon points="107.3,438.7 134.4,455.3 109.5,450.3" fill="#365f9c" stroke="#325890" stroke-width="0.3"/>
<polygon points="109.5,450.3 134.4,455.3 105.9,466.8" fill="#345c97" stroke="#325991" stroke-width="0.3"/>
<polygon points="134.4,455.3 123.6,465.2 105.9,466.8" fill="#345b95" stroke="#335a93" stroke-width="0.3"/>
<polygon points="129.6,255.6 151.2,259.5 163.2,266.9" fill="#32578f" stroke="#32578f" stroke-width="0.3"/>
<polygon points="129.6,255.6 163.2,266.9 134.8,274.0" fill="#325890" stroke="#365f9b" stroke-width="0.3"/>
<polygon points="134.8,274.0 163.2,266.9 127.5,285.5" fill="#345b94" stroke="#325890" stroke-width="0.3"/>
<polygon points="163.2,266.9 147.5,281.6 127.5,285.5" fill="#365f9b" stroke="#36609c" stroke-width="0.3"/>
<polygon points="127.5,285.5 147.5,281.6 148.7,297.9" fill="#335a93" stroke="#32578f" stroke-width="0.3"/>
<polygon points="127.5,285.5 148.7,297.9 119.2,299.8" fill="#32588f" stroke="#31578e" stroke-width="0.3"/>
<polygon points="119.2,299.8 148.7,297.9 130.9,316.4" fill="#335992" stroke="#31578e" stroke-width="0.3"/>
<polygon points="148.7,297.9 155.8,309.9 130.9,316.4" fill="#325890" stroke="#325890" stroke-width="0.3"/>
<polygon points="130.9,316.4 155.8,309.9 144.1,325.3" fill="#345b95" stroke="#365e9a" stroke-width="0.3"/>
<polygon points="130.9,316.4 144.1,325.3 134.4,324.1" fill="#355d98" stroke="#335a93" stroke-width="0.3"/>
<polygon points="134.4,324.1 144.1,325.3 125.7,341.5" fill="#335a93" stroke="#345b95" stroke-width="0.3"/>
<polygon points="144.1,325.3 151.4,340.6 125.7,341.5" fill="#355e9a" stroke="#355e99" stroke-width="0.3"/>
<polygon points="125.7,341.5 151.4,340.6 163.1,355.7" fill="#345c96" stroke="#365e9a" stroke-width="0.3"/>
<polygon points="125.7,341.5 163.1,355.7 118.5,353.7" fill="#3a65a6" stroke="#355d98" stroke-width="0.3"/>
<polygon points="118.5,353.7 163.1,355.7 121.4,364.6" fill="#36609c" stroke="#37619e" stroke-width="0.3"/>
<polygon points="163.1,355.7 154.3,369.1 121.4,364.6" fill="#37619f" stroke="#345b95" stroke-width="0.3"/>
<polygon points="121.4,364.6 154.3,369.1 157.5,378.0" fill="#325891" stroke="#325890" stroke-width="0.3"/>
<polygon points="121.4,364.6 157.5,378.0 119.2,384.4" fill="#335a93" stroke="#335a93" stroke-width="0.3"/>
<polygon points="119.2,384.4 157.5,378.0 120.6,393.7" fill="#365f9c" stroke="#365e9a" stroke-width="0.3"/>
<polygon points="157.5,378.0 162.0,398.5 120.6,393.7" fill="#31568c" stroke="#2c4d7f" stroke-width="0.3"/>
<polygon points="120.6,393.7 162.0,398.5 161.5,412.7" fill="#274571" stroke="#2b4c7c" stroke-width="0.3"/>
<polygon points="120.6,393.7 161.5,412.7 125.8,413.3" fill="#2f5388" stroke="#2d4f81" stroke-width="0.3"/>
<polygon points="125.8,413.3 161.5,412.7 119.6,423.5" fill="#345b96" stroke="#31568c" stroke-width="0.3"/>
<polygon points="161.5,412.7 151.8,423.1 119.6,423.5" fill="#335a93" stroke="#365f9b" stroke-width="0.3"/>
<polygon points="119.6,423.5 151.8,423.1 146.1,439.2" fill="#355e9a" stroke="#365e9a" stroke-width="0.3"/>
<polygon points="119.6,423.5 146.1,439.2 129.0,441.5" fill="#365f9c" stroke="#325890" stroke-width="0.3"/>
<polygon points="129.0,441.5 146.1,439.2 134.4,455.3" fill="#31578e" stroke="#32578f" stroke-width="0.3"/>
<polygon points="146.1,439.2 145.2,448.1 134.4,455.3" fill="#345b95" stroke="#355c97" stroke-width="0.3"/>
<polygon points="134.4,455.3 145.2,448.1 148.2,463.0" fill="#365f9b" stroke="#355d98" stroke-width="0.3"/>
<polygon points="134.4,455.3 148.2,463.0 123.6,465.2" fill="#345c97" stroke="#355d99" stroke-width="0.3"/>
<polygon points="151.2,259.5 176.8,252.0 163.2,266.9" fill="#335a94" stroke="#345b95" stroke-width="0.3"/>
<polygon points="176.8,252.0 170.0,266.9 163.2,266.9" fill="#31568d" stroke="#355d99" stroke-width="0.3"/>
<polygon points="163.2,266.9 170.0,266.9 172.0,282.8" fill="#325890" stroke="#365f9b" stroke-width="0.3"/>
<polygon points="163.2,266.9 172.0,282.8 147.5,281.6" fill="#345c97" stroke="#325991" stroke-width="0.3"/>
<polygon points="147.5,281.6 172.0,282.8 148.7,297.9" fill="#31578e" stroke="#325890" stroke-width="0.3"/>
<polygon points="172.0,282.8 170.5,301.4 148.7,297.9" fill="#345c96" stroke="#355d97" stroke-width="0.3"/>
<polygon points="148.7,297.9 170.5,301.4 182.3,308.8" fill="#31578e" stroke="#31568d" stroke-width="0.3"/>
<polygon points="148.7,297.9 182.3,308.8 155.8,309.9" fill="#345b95" stroke="#345b96" stroke-width="0.3"/>
<polygon points="155.8,309.9 182.3,308.8 144.1,325.3" fill="#345b95" stroke="#335a92" stroke-width="0.3"/>
<polygon points="182.3,308.8 175.0,324.6 144.1,325.3" fill="#37619e" stroke="#345b95" stroke-width="0.3"/>
<polygon points="144.1,325.3 175.0,324.6 177.3,336.6" fill="#37609e" stroke="#3862a0" stroke-width="0.3"/>
<polygon points="144.1,325.3 177.3,336.6 151.4,340.6" fill="#3a66a6" stroke="#3862a1" stroke-width="0.3"/>
<polygon points="151.4,340.6 177.3,336.6 163.1,355.7" fill="#37619f" stroke="#355d98" stroke-width="0.3"/>
<polygon points="177.3,336.6 187.0,358.4 163.1,355.7" fill="#325890" stroke="#325890" stroke-width="0.3"/>
<polygon points="163.1,355.7 187.0,358.4 179.3,367.9" fill="#365f9c" stroke="#355d98" stroke-width="0.3"/>
<polygon points="163.1,355.7 179.3,367.9 154.3,369.1" fill="#335991" stroke="#31568d" stroke-width="0.3"/>
<polygon points="154.3,369.1 179.3,367.9 157.5,378.0" fill="#345b94" stroke="#355c97" stroke-width="0.3"/>
<polygon points="179.3,367.9 171.7,378.4 157.5,378.0" fill="#335a93" stroke="#325890" stroke-width="0.3"/>
<polygon points="157.5,378.0 171.7,378.4 176.9,393.9" fill="#355c97" stroke="#365f9b" stroke-width="0.3"/>
<polygon points="157.5,378.0 176.9,393.9 162.0,398.5" fill="#2f5286" stroke="#2d5083" stroke-width="0.3"/>
<polygon points="162.0,398.5 176.9,393.9 161.5,412.7" fill="#2b4b7b" stroke="#2b4c7c" stroke-width="0.3"/>
<polygon points="176.9,393.9 186.6,407.0 161.5,412.7" fill="#305489" stroke="#2d4f81" stroke-width="0.3"/>
<polygon points="161.5,412.7 186.6,407.0 170.5,428.1" fill="#355e99" stroke="#355d98" stroke-width="0.3"/>
<polygon points="161.5,412.7 170.5,428.1 151.8,423.1" fill="#345b94" stroke="#325890" stroke-width="0.3"/>
<polygon points="151.8,423.1 170.5,428.1 146.1,439.2" fill="#365f9c" stroke="#335991" stroke-width="0.3"/>
<polygon points="170.5,428.1 180.6,434.8 146.1,439.2" fill="#355e99" stroke="#325890" stroke-width="0.3"/>
<polygon points="146.1,439.2 180.6,434.8 180.9,447.7" fill="#325890" stroke="#355d98" stroke-width="0.3"/>
<polygon points="146.1,439.2 180.9,447.7 145.2,448.1" fill="#325991" stroke="#365f9c" stroke-width="0.3"/>
<polygon points="145.2,448.1 180.9,447.7 148.2,463.0" fill="#345b94" stroke="#32588f" stroke-width="0.3"/>
<polygon points="180.9,447.7 180.6,470.3 148.2,463.0" fill="#325890" stroke="#335a93" stroke-width="0.3"/>
<polygon points="176.8,252.0 213.3,257.8 201.2,268.8" fill="#355c97" stroke="#365f9b" stroke-width="0.3"/>
<polygon points="176.8,252.0 201.2,268.8 170.0,266.9" fill="#32578f" stroke="#335a93" stroke-width="0.3"/>
<polygon points="170.0,266.9 201.2,268.8 172.0,282.8" fill="#325890" stroke="#365f9c" stroke-width="0.3"/>
<polygon points="201.2,268.8 199.3,286.4 172.0,282.8" fill="#32578f" stroke="#31568d" stroke-width="0.3"/>
<polygon points="172.0,282.8 199.3,286.4 206.7,300.5" fill="#31568d" stroke="#335a93" stroke-width="0.3"/>
<polygon points="172.0,282.8 206.7,300.5 170.5,301.4" fill="#365f9b" stroke="#365e9a" stroke-width="0.3"/>
<polygon points="170.5,301.4 206.7,300.5 182.3,308.8" fill="#355d98" stroke="#36609c" stroke-width="0.3"/>
<polygon points="206.7,300.5 202.6,309.5 182.3,308.8" fill="#365f9b" stroke="#335992" stroke-width="0.3"/>
<polygon points="182.3,308.8 202.6,309.5 212.2,330.4" fill="#32588f" stroke="#365f9b" stroke-width="0.3"/>
<polygon points="182.3,308.8 212.2,330.4 175.0,324.6" fill="#37619e" stroke="#335a92" stroke-width="0.3"/>
<polygon points="175.0,324.6 212.2,330.4 177.3,336.6" fill="#3862a0" stroke="#365f9c" stroke-width="0.3"/>
<polygon points="212.2,330.4 213.1,342.8 177.3,336.6" fill="#335a93" stroke="#335a93" stroke-width="0.3"/>
<polygon points="177.3,336.6 213.1,342.8 212.4,356.2" fill="#32578f" stroke="#31568c" stroke-width="0.3"/>
<polygon points="177.3,336.6 212.4,356.2 187.0,358.4" fill="#325891" stroke="#335992" stroke-width="0.3"/>
<polygon points="187.0,358.4 212.4,356.2 179.3,367.9" fill="#365f9c" stroke="#31578e" stroke-width="0.3"/>
<polygon points="212.4,356.2 200.5,368.2 179.3,367.9" fill="#335992" stroke="#2f5286" stroke-width="0.3"/>
<polygon points="179.3,367.9 200.5,368.2 203.1,377.8" fill="#335992" stroke="#355e99" stroke-width="0.3"/>
<polygon points="179.3,367.9 203.1,377.8 171.7,378.4" fill="#355e99" stroke="#335a93" stroke-width="0.3"/>
<polygon points="171.7,378.4 203.1,377.8 176.9,393.9" fill="#31568d" stroke="#335a94" stroke-width="0.3"/>
<polygon points="203.1,377.8 196.6,394.0 176.9,393.9" fill="#335992" stroke="#365f9b" stroke-width="0.3"/>
<polygon points="176.9,393.9 196.6,394.0 201.2,411.7" fill="#2f5387" stroke="#30548a" stroke-width="0.3"/>
<polygon points="176.9,393.9 201.2,411.7 186.6,407.0" fill="#355e9a" stroke="#31558c" stroke-width="0.3"/>
<polygon points="186.6,407.0 201.2,411.7 170.5,428.1" fill="#335a93" stroke="#355e99" stroke-width="0.3"/>
<polygon points="201.2,411.7 215.1,423.5 170.5,428.1" fill="#355d99" stroke="#31568d" stroke-width="0.3"/>
<polygon points="170.5,428.1 215.1,423.5 214.7,442.4" fill="#31568d" stroke="#31568d" stroke-width="0.3"/>
<polygon points="170.5,428.1 214.7,442.4 180.6,434.8" fill="#365f9b" stroke="#325890" stroke-width="0.3"/>
<polygon points="180.6,434.8 214.7,442.4 180.9,447.7" fill="#355d98" stroke="#365f9b" stroke-width="0.3"/>
<polygon points="214.7,442.4 215.1,450.8 180.9,447.7" fill="#335992" stroke="#325891" stroke-width="0.3"/>
<polygon points="180.9,447.7 215.1,450.8 200.4,463.5" fill="#365f9c" stroke="#345c96" stroke-width="0.3"/>
<polygon points="180.9,447.7 200.4,463.5 180.6,470.3" fill="#325890" stroke="#355d98" stroke-width="0.3"/>
<polygon points="213.3,257.8 225.9,253.3 201.2,268.8" fill="#335991" stroke="#325891" stroke-width="0.3"/>
<polygon points="225.9,253.3 234.5,273.6 201.2,268.8" fill="#31568c" stroke="#355d98" stroke-width="0.3"/>
<polygon points="201.2,268.8 234.5,273.6 238.8,283.8" fill="#365f9b" stroke="#345c96" stroke-width="0.3"/>
<polygon points="201.2,268.8 238.8,283.8 199.3,286.4" fill="#365f9b" stroke="#31568d" stroke-width="0.3"/>
<polygon points="199.3,286.4 238.8,283.8 206.7,300.5" fill="#2f5286" stroke="#30548a" stroke-width="0.3"/>
<polygon points="238.8,283.8 235.1,300.7 206.7,300.5" fill="#2d4f82" stroke="#2d4f82" stroke-width="0.3"/>
<polygon points="206.7,300.5 235.1,300.7 223.7,313.4" fill="#2f5388" stroke="#2f5286" stroke-width="0.3"/>
<polygon points="206.7,300.5 223.7,313.4 202.6,309.5" fill="#2f5286" stroke="#2f5287" stroke-width="0.3"/>
<polygon points="202.6,309.5 223.7,313.4 212.2,330.4" fill="#30558b" stroke="#2c4d7f" stroke-width="0.3"/>
<polygon points="223.7,313.4 240.2,328.5 212.2,330.4" fill="#355e99" stroke="#355d98" stroke-width="0.3"/>
<polygon points="212.2,330.4 240.2,328.5 237.0,339.8" fill="#355e99" stroke="#355d99" stroke-width="0.3"/>
<polygon points="212.2,330.4 237.0,339.8 213.1,342.8" fill="#345c96" stroke="#335992" stroke-width="0.3"/>
<polygon points="213.1,342.8 237.0,339.8 212.4,356.2" fill="#335991" stroke="#335992" stroke-width="0.3"/>
<polygon points="237.0,339.8 225.6,356.6 212.4,356.2" fill="#355d99" stroke="#31578e" stroke-width="0.3"/>
<polygon points="212.4,356.2 225.6,356.6 228.7,370.7" fill="#284774" stroke="#2b4c7d" stroke-width="0.3"/>
<polygon points="212.4,356.2 228.7,370.7 200.5,368.2" fill="#294876" stroke="#284673" stroke-width="0.3"/>
<polygon points="200.5,368.2 228.7,370.7 203.1,377.8" fill="#31568d" stroke="#345b95" stroke-width="0.3"/>
<polygon points="228.7,370.7 241.4,381.1 203.1,377.8" fill="#335992" stroke="#365f9c" stroke-width="0.3"/>
<polygon points="203.1,377.8 241.4,381.1 230.0,400.0" fill="#365e9a" stroke="#365f9c" stroke-width="0.3"/>
<polygon points="203.1,377.8 230.0,400.0 196.6,394.0" fill="#32578e" stroke="#31558c" stroke-width="0.3"/>
<polygon points="196.6,394.0 230.0,400.0 201.2,411.7" fill="#2b4c7d" stroke="#2e5083" stroke-width="0.3"/>
<polygon points="230.0,400.0 236.5,407.0 201.2,411.7" fill="#335991" stroke="#31568d" stroke-width="0.3"/>
<polygon points="201.2,411.7 236.5,407.0 224.5,420.9" fill="#325890" stroke="#335a93" stroke-width="0.3"/>
<polygon points="201.2,411.7 224.5,420.9 215.1,423.5" fill="#345c96" stroke="#355c97" stroke-width="0.3"/>
<polygon points="215.1,423.5 224.5,420.9 214.7,442.4" fill="#355d98" stroke="#365e9a" stroke-width="0.3"/>
<polygon points="224.5,420.9 240.1,440.8 214.7,442.4" fill="#355c97" stroke="#31578e" stroke-width="0.3"/>
<polygon points="214.7,442.4 240.1,440.8 224.9,454.9" fill="#355e9a" stroke="#325991" stroke-width="0.3"/>
<polygon points="214.7,442.4 224.9,454.9 215.1,450.8" fill="#345b95" stroke="#335992" stroke-width="0.3"/>
<polygon points="215.1,450.8 224.9,454.9 200.4,463.5" fill="#355d98" stroke="#32588f" stroke-width="0.3"/>
<polygon points="224.9,454.9 241.6,467.4 200.4,463.5" fill="#325890" stroke="#325890" stroke-width="0.3"/>
<polygon points="225.9,253.3 255.0,256.4 250.6,265.6" fill="#32578f" stroke="#365e9a" stroke-width="0.3"/>
<polygon points="225.9,253.3 250.6,265.6 234.5,273.6" fill="#345b96" stroke="#335992" stroke-width="0.3"/>
<polygon points="234.5,273.6 250.6,265.6 238.8,283.8" fill="#335a93" stroke="#365f9c" stroke-width="0.3"/>
<polygon points="250.6,265.6 267.4,285.3 238.8,283.8" fill="#345b94" stroke="#325890" stroke-width="0.3"/>
<polygon points="238.8,283.8 267.4,285.3 258.5,301.9" fill="#2a4b7a" stroke="#2a4978" stroke-width="0.3"/>
<polygon points="238.8,283.8 258.5,301.9 235.1,300.7" fill="#2a4a7a" stroke="#25426b" stroke-width="0.3"/>
<polygon points="235.1,300.7 258.5,301.9 223.7,313.4" fill="#2f5286" stroke="#31558c" stroke-width="0.3"/>
<polygon points="258.5,301.9 256.7,315.3 223.7,313.4" fill="#355e9a" stroke="#365f9b" stroke-width="0.3"/>
<polygon points="223.7,313.4 256.7,315.3 264.5,323.4" fill="#31568d" stroke="#325991" stroke-width="0.3"/>
<polygon points="223.7,313.4 264.5,323.4 240.2,328.5" fill="#31578e" stroke="#32588f" stroke-width="0.3"/>
<polygon points="240.2,328.5 264.5,323.4 237.0,339.8" fill="#365f9c" stroke="#345b96" stroke-width="0.3"/>
<polygon points="264.5,323.4 253.0,338.1 237.0,339.8" fill="#365f9b" stroke="#335992" stroke-width="0.3"/>
<polygon points="237.0,339.8 253.0,338.1 252.8,354.8" fill="#365e9a" stroke="#335a93" stroke-width="0.3"/>
<polygon points="237.0,339.8 252.8,354.8 225.6,356.6" fill="#325890" stroke="#355d99" stroke-width="0.3"/>
<polygon points="225.6,356.6 252.8,354.8 228.7,370.7" fill="#2b4b7b" stroke="#26436d" stroke-width="0.3"/>
<polygon points="252.8,354.8 253.2,367.3 228.7,370.7" fill="#25426c" stroke="#26426c" stroke-width="0.3"/>
<polygon points="228.7,370.7 253.2,367.3 250.6,385.7" fill="#325890" stroke="#335992" stroke-width="0.3"/>
<polygon points="228.7,370.7 250.6,385.7 241.4,381.1" fill="#32578f" stroke="#325890" stroke-width="0.3"/>
<polygon points="241.4,381.1 250.6,385.7 230.0,400.0" fill="#325890" stroke="#345c96" stroke-width="0.3"/>
<polygon points="250.6,385.7 255.1,395.6 230.0,400.0" fill="#345c97" stroke="#325890" stroke-width="0.3"/>
<polygon points="230.0,400.0 255.1,395.6 259.7,413.6" fill="#325890" stroke="#345b95" stroke-width="0.3"/>
<polygon points="230.0,400.0 259.7,413.6 236.5,407.0" fill="#355d98" stroke="#325890" stroke-width="0.3"/>
<polygon points="236.5,407.0 259.7,413.6 224.5,420.9" fill="#335991" stroke="#325890" stroke-width="0.3"/>
<polygon points="259.7,413.6 256.4,427.8 224.5,420.9" fill="#355e99" stroke="#345b95" stroke-width="0.3"/>
<polygon points="224.5,420.9 256.4,427.8 258.0,438.3" fill="#31568d" stroke="#31578e" stroke-width="0.3"/>
<polygon points="224.5,420.9 258.0,438.3 240.1,440.8" fill="#335a93" stroke="#345b95" stroke-width="0.3"/>
<polygon points="240.1,440.8 258.0,438.3 224.9,454.9" fill="#345c97" stroke="#31578e" stroke-width="0.3"/>
<polygon points="258.0,438.3 258.5,447.7 224.9,454.9" fill="#32578f" stroke="#355d97" stroke-width="0.3"/>
<polygon points="224.9,454.9 258.5,447.7 256.8,463.1" fill="#335a93" stroke="#325991" stroke-width="0.3"/>
<polygon points="224.9,454.9 256.8,463.1 241.6,467.4" fill="#335991" stroke="#365f9c" stroke-width="0.3"/>
<polygon points="255.0,256.4 274.1,258.7 250.6,265.6" fill="#335991" stroke="#345b95" stroke-width="0.3"/>
<polygon points="274.1,258.7 277.4,269.8 250.6,265.6" fill="#335992" stroke="#335a93" stroke-width="0.3"/>
<polygon points="250.6,265.6 277.4,269.8 288.5,284.5" fill="#365e9a" stroke="#36609c" stroke-width="0.3"/>
<polygon points="250.6,265.6 288.5,284.5 267.4,285.3" fill="#335992" stroke="#32588f" stroke-width="0.3"/>
<polygon points="267.4,285.3 288.5,284.5 258.5,301.9" fill="#2d4e80" stroke="#2a4978" stroke-width="0.3"/>
<polygon points="288.5,284.5 280.5,298.2 258.5,301.9" fill="#294775" stroke="#2e5083" stroke-width="0.3"/>
<polygon points="258.5,301.9 280.5,298.2 285.1,314.6" fill="#31568c" stroke="#335992" stroke-width="0.3"/>
<polygon points="258.5,301.9 285.1,314.6 256.7,315.3" fill="#37619e" stroke="#3a65a6" stroke-width="0.3"/>
<polygon points="256.7,315.3 285.1,314.6 264.5,323.4" fill="#3c69ab" stroke="#3a66a7" stroke-width="0.3"/>
<polygon points="285.1,314.6 276.1,326.5 264.5,323.4" fill="#345b95" stroke="#37609e" stroke-width="0.3"/>
<polygon points="264.5,323.4 276.1,326.5 279.0,338.0" fill="#345c97" stroke="#365f9b" stroke-width="0.3"/>
<polygon points="264.5,323.4 279.0,338.0 253.0,338.1" fill="#31578e" stroke="#345c96" stroke-width="0.3"/>
<polygon points="253.0,338.1 279.0,338.0 252.8,354.8" fill="#335992" stroke="#345b94" stroke-width="0.3"/>
<polygon points="279.0,338.0 289.4,354.1 252.8,354.8" fill="#32578f" stroke="#325991" stroke-width="0.3"/>
<polygon points="252.8,354.8 289.4,354.1 285.2,370.3" fill="#2c4d7e" stroke="#2e5185" stroke-width="0.3"/>
<polygon points="252.8,354.8 285.2,370.3 253.2,367.3" fill="#233e66" stroke="#26426c" stroke-width="0.3"/>
<polygon points="253.2,367.3 285.2,370.3 250.6,385.7" fill="#355e99" stroke="#365f9c" stroke-width="0.3"/>
<polygon points="285.2,370.3 292.2,381.5 250.6,385.7" fill="#32588f" stroke="#31578e" stroke-width="0.3"/>
<polygon points="250.6,385.7 292.2,381.5 286.3,396.0" fill="#345b95" stroke="#345c96" stroke-width="0.3"/>
<polygon points="250.6,385.7 286.3,396.0 255.1,395.6" fill="#335a94" stroke="#31568d" stroke-width="0.3"/>
<polygon points="255.1,395.6 286.3,396.0 259.7,413.6" fill="#3964a4" stroke="#365f9b" stroke-width="0.3"/>
<polygon points="286.3,396.0 284.2,411.7 259.7,413.6" fill="#3965a5" stroke="#3862a0" stroke-width="0.3"/>
<polygon points="259.7,413.6 284.2,411.7 283.0,424.3" fill="#365e9a" stroke="#32588f" stroke-width="0.3"/>
<polygon points="259.7,413.6 283.0,424.3 256.4,427.8" fill="#355d99" stroke="#325890" stroke-width="0.3"/>
<polygon points="256.4,427.8 283.0,424.3 258.0,438.3" fill="#335a93" stroke="#365e9a" stroke-width="0.3"/>
<polygon points="283.0,424.3 283.6,442.0 258.0,438.3" fill="#355e9a" stroke="#32588f" stroke-width="0.3"/>
<polygon points="258.0,438.3 283.6,442.0 288.0,455.4" fill="#325890" stroke="#335a93" stroke-width="0.3"/>
<polygon points="258.0,438.3 288.0,455.4 258.5,447.7" fill="#345b95" stroke="#335992" stroke-width="0.3"/>
<polygon points="258.5,447.7 288.0,455.4 256.8,463.1" fill="#31578e" stroke="#325890" stroke-width="0.3"/>
<polygon points="288.0,455.4 292.8,463.8 256.8,463.1" fill="#355d98" stroke="#365f9b" stroke-width="0.3"/>
<polygon points="274.1,258.7 311.2,260.0 316.8,266.7" fill="#31568d" stroke="#345b95" stroke-width="0.3"/>
<polygon points="274.1,258.7 316.8,266.7 277.4,269.8" fill="#355d98" stroke="#31568d" stroke-width="0.3"/>
<polygon points="277.4,269.8 316.8,266.7 288.5,284.5" fill="#355e9a" stroke="#31578e" stroke-width="0.3"/>
<polygon points="316.8,266.7 302.4,283.5 288.5,284.5" fill="#345c96" stroke="#345b95" stroke-width="0.3"/>
<polygon points="288.5,284.5 302.4,283.5 301.5,295.7" fill="#345c96" stroke="#325991" stroke-width="0.3"/>
<polygon points="288.5,284.5 301.5,295.7 280.5,298.2" fill="#31568d" stroke="#32588f" stroke-width="0.3"/>
<polygon points="280.5,298.2 301.5,295.7 285.1,314.6" fill="#31578e" stroke="#335992" stroke-width="0.3"/>
<polygon points="301.5,295.7 301.5,313.5 285.1,314.6" fill="#2f5286" stroke="#2f5286" stroke-width="0.3"/>
<polygon points="285.1,314.6 301.5,313.5 315.7,329.6" fill="#31568d" stroke="#345c96" stroke-width="0.3"/>
<polygon points="285.1,314.6 315.7,329.6 276.1,326.5" fill="#345b94" stroke="#325890" stroke-width="0.3"/>
<polygon points="276.1,326.5 315.7,329.6 279.0,338.0" fill="#355d99" stroke="#355d99" stroke-width="0.3"/>
<polygon points="315.7,329.6 303.1,341.9 279.0,338.0" fill="#2c4e7f" stroke="#2b4b7b" stroke-width="0.3"/>
<polygon points="279.0,338.0 303.1,341.9 313.2,350.8" fill="#335992" stroke="#31568c" stroke-width="0.3"/>
<polygon points="279.0,338.0 313.2,350.8 289.4,354.1" fill="#31578e" stroke="#335a93" stroke-width="0.3"/>
<polygon points="289.4,354.1 313.2,350.8 285.2,370.3" fill="#31578e" stroke="#335a93" stroke-width="0.3"/>
<polygon points="313.2,350.8 317.7,372.2 285.2,370.3" fill="#31578e" stroke="#2f5287" stroke-width="0.3"/>
<polygon points="285.2,370.3 317.7,372.2 304.4,386.1" fill="#345c96" stroke="#31578e" stroke-width="0.3"/>
<polygon points="285.2,370.3 304.4,386.1 292.2,381.5" fill="#345b95" stroke="#345c96" stroke-width="0.3"/>
<polygon points="292.2,381.5 304.4,386.1 286.3,396.0" fill="#2e5184" stroke="#2b4c7d" stroke-width="0.3"/>
<polygon points="304.4,386.1 308.0,395.9 286.3,396.0" fill="#2e5084" stroke="#2d4f82" stroke-width="0.3"/>
<polygon points="286.3,396.0 308.0,395.9 319.8,413.0" fill="#3862a0" stroke="#335a93" stroke-width="0.3"/>
<polygon points="286.3,396.0 319.8,413.0 284.2,411.7" fill="#3863a2" stroke="#3965a4" stroke-width="0.3"/>
<polygon points="284.2,411.7 319.8,413.0 283.0,424.3" fill="#355d98" stroke="#355e99" stroke-width="0.3"/>
<polygon points="319.8,413.0 303.2,423.4 283.0,424.3" fill="#32588f" stroke="#365f9c" stroke-width="0.3"/>
<polygon points="283.0,424.3 303.2,423.4 310.3,436.6" fill="#345b94" stroke="#365f9c" stroke-width="0.3"/>
<polygon points="283.0,424.3 310.3,436.6 283.6,442.0" fill="#365f9b" stroke="#32578f" stroke-width="0.3"/>
<polygon points="283.6,442.0 310.3,436.6 288.0,455.4" fill="#355d99" stroke="#365f9b" stroke-width="0.3"/>
<polygon points="310.3,436.6 303.9,450.4 288.0,455.4" fill="#31568d" stroke="#335992" stroke-width="0.3"/>
<polygon points="288.0,455.4 303.9,450.4 314.4,461.7" fill="#355d98" stroke="#32578f" stroke-width="0.3"/>
<polygon points="288.0,455.4 314.4,461.7 292.8,463.8" fill="#365f9b" stroke="#325891" stroke-width="0.3"/>
<polygon points="311.2,260.0 337.1,255.5 316.8,266.7" fill="#355e99" stroke="#32578f" stroke-width="0.3"/>
<polygon points="337.1,255.5 326.4,268.5 316.8,266.7" fill="#345b94" stroke="#365f9b" stroke-width="0.3"/>
<polygon points="316.8,266.7 326.4,268.5 338.5,284.1" fill="#325890" stroke="#325891" stroke-width="0.3"/>
<polygon points="316.8,266.7 338.5,284.1 302.4,283.5" fill="#345b94" stroke="#335991" stroke-width="0.3"/>
<polygon points="302.4,283.5 338.5,284.1 301.5,295.7" fill="#31568d" stroke="#32588f" stroke-width="0.3"/>
<polygon points="338.5,284.1 327.3,302.4 301.5,295.7" fill="#30558a" stroke="#345c97" stroke-width="0.3"/>
<polygon points="301.5,295.7 327.3,302.4 341.8,316.2" fill="#2b4b7b" stroke="#2c4d7f" stroke-width="0.3"/>
<polygon points="301.5,295.7 341.8,316.2 301.5,313.5" fill="#294876" stroke="#2c4e80" stroke-width="0.3"/>
<polygon points="301.5,313.5 341.8,316.2 315.7,329.6" fill="#31578e" stroke="#345b95" stroke-width="0.3"/>
<polygon points="341.8,316.2 328.1,323.9 315.7,329.6" fill="#345c96" stroke="#335992" stroke-width="0.3"/>
<polygon points="315.7,329.6 328.1,323.9 326.8,342.5" fill="#2c4d7d" stroke="#2a4978" stroke-width="0.3"/>
<polygon points="315.7,329.6 326.8,342.5 303.1,341.9" fill="#284775" stroke="#2a4a79" stroke-width="0.3"/>
<polygon points="303.1,341.9 326.8,342.5 313.2,350.8" fill="#2e5084" stroke="#335992" stroke-width="0.3"/>
<polygon points="326.8,342.5 331.4,350.7 313.2,350.8" fill="#345c96" stroke="#335a93" stroke-width="0.3"/>
<polygon points="313.2,350.8 331.4,350.7 334.4,371.7" fill="#355e99" stroke="#325891" stroke-width="0.3"/>
<polygon points="313.2,350.8 334.4,371.7 317.7,372.2" fill="#365f9c" stroke="#345b96" stroke-width="0.3"/>
<polygon points="317.7,372.2 334.4,371.7 304.4,386.1" fill="#335992" stroke="#355d99" stroke-width="0.3"/>
<polygon points="334.4,371.7 342.4,379.8 304.4,386.1" fill="#335a93" stroke="#32578f" stroke-width="0.3"/>
<polygon points="304.4,386.1 342.4,379.8 329.0,399.8" fill="#335a93" stroke="#2f5388" stroke-width="0.3"/>
<polygon points="304.4,386.1 329.0,399.8 308.0,395.9" fill="#31568d" stroke="#2e5184" stroke-width="0.3"/>
<polygon points="308.0,395.9 329.0,399.8 319.8,413.0" fill="#345c97" stroke="#36609c" stroke-width="0.3"/>
<polygon points="329.0,399.8 337.4,411.8 319.8,413.0" fill="#345b96" stroke="#345c97" stroke-width="0.3"/>
<polygon points="319.8,413.0 337.4,411.8 327.8,420.0" fill="#335991" stroke="#31568c" stroke-width="0.3"/>
<polygon points="319.8,413.0 327.8,420.0 303.2,423.4" fill="#31568d" stroke="#32578f" stroke-width="0.3"/>
<polygon points="303.2,423.4 327.8,420.0 310.3,436.6" fill="#345c96" stroke="#335a93" stroke-width="0.3"/>
<polygon points="327.8,420.0 339.8,437.3 310.3,436.6" fill="#345b95" stroke="#365f9b" stroke-width="0.3"/>
<polygon points="310.3,436.6 339.8,437.3 327.4,455.9" fill="#32578e" stroke="#325890" stroke-width="0.3"/>
<polygon points="310.3,436.6 327.4,455.9 303.9,450.4" fill="#345c97" stroke="#31568d" stroke-width="0.3"/>
<polygon points="303.9,450.4 327.4,455.9 314.4,461.7" fill="#31568c" stroke="#335992" stroke-width="0.3"/>
<polygon points="327.4,455.9 338.7,468.7 314.4,461.7" fill="#31578e" stroke="#335992" stroke-width="0.3"/>
<polygon points="337.1,255.5 353.7,259.2 353.3,273.3" fill="#325890" stroke="#345b96" stroke-width="0.3"/>
<polygon points="337.1,255.5 353.3,273.3 326.4,268.5" fill="#345c96" stroke="#325890" stroke-width="0.3"/>
<polygon points="326.4,268.5 353.3,273.3 338.5,284.1" fill="#345c96" stroke="#335a94" stroke-width="0.3"/>
<polygon points="353.3,273.3 361.1,282.6 338.5,284.1" fill="#32578e" stroke="#365f9b" stroke-width="0.3"/>
<polygon points="338.5,284.1 361.1,282.6 363.1,301.8" fill="#325890" stroke="#32578f" stroke-width="0.3"/>
<polygon points="338.5,284.1 363.1,301.8 327.3,302.4" fill="#31568d" stroke="#345c96" stroke-width="0.3"/>
<polygon points="327.3,302.4 363.1,301.8 341.8,316.2" fill="#31568c" stroke="#30558b" stroke-width="0.3"/>
<polygon points="363.1,301.8 357.4,308.7 341.8,316.2" fill="#335a93" stroke="#325891" stroke-width="0.3"/>
<polygon points="341.8,316.2 357.4,308.7 362.5,323.6" fill="#335991" stroke="#365f9b" stroke-width="0.3"/>
<polygon points="341.8,316.2 362.5,323.6 328.1,323.9" fill="#345c97" stroke="#335a93" stroke-width="0.3"/>
<polygon points="328.1,323.9 362.5,323.6 326.8,342.5" fill="#355d99" stroke="#345b95" stroke-width="0.3"/>
<polygon points="362.5,323.6 354.2,337.0 326.8,342.5" fill="#3b68aa" stroke="#3a66a7" stroke-width="0.3"/>
<polygon points="326.8,342.5 354.2,337.0 353.0,351.3" fill="#37619e" stroke="#3b67a9" stroke-width="0.3"/>
<polygon points="326.8,342.5 353.0,351.3 331.4,350.7" fill="#325890" stroke="#355d98" stroke-width="0.3"/>
<polygon points="331.4,350.7 353.0,351.3 334.4,371.7" fill="#345c97" stroke="#335a94" stroke-width="0.3"/>
<polygon points="353.0,351.3 358.2,366.2 334.4,371.7" fill="#355d98" stroke="#3964a4" stroke-width="0.3"/>
<polygon points="334.4,371.7 358.2,366.2 367.2,380.1" fill="#335992" stroke="#365f9b" stroke-width="0.3"/>
<polygon points="334.4,371.7 367.2,380.1 342.4,379.8" fill="#365f9b" stroke="#32578f" stroke-width="0.3"/>
<polygon points="342.4,379.8 367.2,380.1 329.0,399.8" fill="#32588f" stroke="#345c96" stroke-width="0.3"/>
<polygon points="367.2,380.1 362.0,393.1 329.0,399.8" fill="#345b94" stroke="#345c97" stroke-width="0.3"/>
<polygon points="329.0,399.8 362.0,393.1 358.9,405.7" fill="#355e99" stroke="#32578f" stroke-width="0.3"/>
<polygon points="329.0,399.8 358.9,405.7 337.4,411.8" fill="#335991" stroke="#325991" stroke-width="0.3"/>
<polygon points="337.4,411.8 358.9,405.7 327.8,420.0" fill="#31568d" stroke="#365e9b" stroke-width="0.3"/>
<polygon points="358.9,405.7 357.0,419.6 327.8,420.0" fill="#355d99" stroke="#355d98" stroke-width="0.3"/>
<polygon points="327.8,420.0 357.0,419.6 366.7,438.5" fill="#31568c" stroke="#365e9a" stroke-width="0.3"/>
<polygon points="327.8,420.0 366.7,438.5 339.8,437.3" fill="#355d98" stroke="#335a94" stroke-width="0.3"/>
<polygon points="339.8,437.3 366.7,438.5 327.4,455.9" fill="#355d98" stroke="#335a94" stroke-width="0.3"/>
<polygon points="366.7,438.5 355.8,451.8 327.4,455.9" fill="#325890" stroke="#31578e" stroke-width="0.3"/>
<polygon points="327.4,455.9 355.8,451.8 370.7,462.5" fill="#325890" stroke="#31568d" stroke-width="0.3"/>
<polygon points="327.4,455.9 370.7,462.5 338.7,468.7" fill="#335992" stroke="#355d98" stroke-width="0.3"/>
<polygon points="353.7,259.2 394.4,255.4 353.3,273.3" fill="#355d97" stroke="#365e9a" stroke-width="0.3"/>
<polygon points="394.4,255.4 387.9,273.0 353.3,273.3" fill="#355d98" stroke="#325891" stroke-width="0.3"/>
<polygon points="353.3,273.3 387.9,273.0 385.9,284.1" fill="#345b95" stroke="#335a93" stroke-width="0.3"/>
<polygon points="353.3,273.3 385.9,284.1 361.1,282.6" fill="#355d99" stroke="#345b95" stroke-width="0.3"/>
<polygon points="361.1,282.6 385.9,284.1 363.1,301.8" fill="#325891" stroke="#345c97" stroke-width="0.3"/>
<polygon points="385.9,284.1 391.8,302.3 363.1,301.8" fill="#365f9c" stroke="#325890" stroke-width="0.3"/>
<polygon points="363.1,301.8 391.8,302.3 384.9,315.0" fill="#365e9a" stroke="#31568d" stroke-width="0.3"/>
<polygon points="363.1,301.8 384.9,315.0 357.4,308.7" fill="#325890" stroke="#325890" stroke-width="0.3"/>
<polygon points="357.4,308.7 384.9,315.0 362.5,323.6" fill="#3862a0" stroke="#3964a3" stroke-width="0.3"/>
<polygon points="384.9,315.0 392.1,327.2 362.5,323.6" fill="#3862a0" stroke="#355e9a" stroke-width="0.3"/>
<polygon points="362.5,323.6 392.1,327.2 386.1,338.6" fill="#3b67a9" stroke="#3862a0" stroke-width="0.3"/>
<polygon points="362.5,323.6 386.1,338.6 354.2,337.0" fill="#3a66a7" stroke="#3e6cb1" stroke-width="0.3"/>
<polygon points="354.2,337.0 386.1,338.6 353.0,351.3" fill="#3d6cb0" stroke="#3e6cb1" stroke-width="0.3"/>
<polygon points="386.1,338.6 379.1,350.7 353.0,351.3" fill="#3d6baf" stroke="#3f6eb4" stroke-width="0.3"/>
<polygon points="353.0,351.3 379.1,350.7 379.4,370.2" fill="#3b68a9" stroke="#3d6baf" stroke-width="0.3"/>
<polygon points="353.0,351.3 379.4,370.2 358.2,366.2" fill="#3b68ab" stroke="#3c6aad" stroke-width="0.3"/>
<polygon points="358.2,366.2 379.4,370.2 367.2,380.1" fill="#37609d" stroke="#3863a2" stroke-width="0.3"/>
<polygon points="379.4,370.2 383.1,379.0 367.2,380.1" fill="#345c97" stroke="#335992" stroke-width="0.3"/>
<polygon points="367.2,380.1 383.1,379.0 379.7,399.1" fill="#325890" stroke="#345c96" stroke-width="0.3"/>
<polygon points="367.2,380.1 379.7,399.1 362.0,393.1" fill="#31578e" stroke="#365f9b" stroke-width="0.3"/>
<polygon points="362.0,393.1 379.7,399.1 358.9,405.7" fill="#32578f" stroke="#31568d" stroke-width="0.3"/>
<polygon points="379.7,399.1 395.4,411.5 358.9,405.7" fill="#31578e" stroke="#365f9b" stroke-width="0.3"/>
<polygon points="358.9,405.7 395.4,411.5 383.6,421.7" fill="#335992" stroke="#32578f" stroke-width="0.3"/>
<polygon points="358.9,405.7 383.6,421.7 357.0,419.6" fill="#31568d" stroke="#31568d" stroke-width="0.3"/>
<polygon points="357.0,419.6 383.6,421.7 366.7,438.5" fill="#355d97" stroke="#345c96" stroke-width="0.3"/>
<polygon points="383.6,421.7 383.9,437.6 366.7,438.5" fill="#355d97" stroke="#355d98" stroke-width="0.3"/>
<polygon points="366.7,438.5 383.9,437.6 381.2,451.5" fill="#31568d" stroke="#345c96" stroke-width="0.3"/>
<polygon points="366.7,438.5 381.2,451.5 355.8,451.8" fill="#335992" stroke="#355e99" stroke-width="0.3"/>
<polygon points="355.8,451.8 381.2,451.5 370.7,462.5" fill="#355e99" stroke="#365e9b" stroke-width="0.3"/>
<polygon points="381.2,451.5 383.3,470.2 370.7,462.5" fill="#31568d" stroke="#365e9a" stroke-width="0.3"/>
<polygon points="394.4,255.4 423.5,256.4 408.9,274.2" fill="#365f9b" stroke="#365f9b" stroke-width="0.3"/>
<polygon points="394.4,255.4 408.9,274.2 387.9,273.0" fill="#31578e" stroke="#325890" stroke-width="0.3"/>
<polygon points="387.9,273.0 408.9,274.2 385.9,284.1" fill="#31578e" stroke="#31568d" stroke-width="0.3"/>
<polygon points="408.9,274.2 410.2,282.7 385.9,284.1" fill="#365e9a" stroke="#355e99" stroke-width="0.3"/>
<polygon points="385.9,284.1 410.2,282.7 404.0,296.9" fill="#345c96" stroke="#355e9a" stroke-width="0.3"/>
<polygon points="385.9,284.1 404.0,296.9 391.8,302.3" fill="#345c96" stroke="#325991" stroke-width="0.3"/>
<polygon points="391.8,302.3 404.0,296.9 384.9,315.0" fill="#31578e" stroke="#31578e" stroke-width="0.3"/>
<polygon points="404.0,296.9 413.5,312.0 384.9,315.0" fill="#355d98" stroke="#325890" stroke-width="0.3"/>
<polygon points="384.9,315.0 413.5,312.0 408.0,326.0" fill="#335991" stroke="#335a93" stroke-width="0.3"/>
<polygon points="384.9,315.0 408.0,326.0 392.1,327.2" fill="#31568d" stroke="#325890" stroke-width="0.3"/>
<polygon points="392.1,327.2 408.0,326.0 386.1,338.6" fill="#325991" stroke="#355d98" stroke-width="0.3"/>
<polygon points="408.0,326.0 404.1,337.9 386.1,338.6" fill="#335992" stroke="#335991" stroke-width="0.3"/>
<polygon points="386.1,338.6 404.1,337.9 405.8,353.1" fill="#365f9c" stroke="#345b94" stroke-width="0.3"/>
<polygon points="386.1,338.6 405.8,353.1 379.1,350.7" fill="#3863a1" stroke="#37609d" stroke-width="0.3"/>
<polygon points="379.1,350.7 405.8,353.1 379.4,370.2" fill="#335a94" stroke="#365e9a" stroke-width="0.3"/>
<polygon points="405.8,353.1 404.8,363.7 379.4,370.2" fill="#335a93" stroke="#355d99" stroke-width="0.3"/>
<polygon points="379.4,370.2 404.8,363.7 410.1,379.6" fill="#335992" stroke="#355d98" stroke-width="0.3"/>
<polygon points="379.4,370.2 410.1,379.6 383.1,379.0" fill="#345b95" stroke="#325890" stroke-width="0.3"/>
<polygon points="383.1,379.0 410.1,379.6 379.7,399.1" fill="#365e9a" stroke="#31578e" stroke-width="0.3"/>
<polygon points="410.1,379.6 415.7,396.3 379.7,399.1" fill="#355e99" stroke="#32578f" stroke-width="0.3"/>
<polygon points="379.7,399.1 415.7,396.3 419.0,411.4" fill="#31568c" stroke="#325890" stroke-width="0.3"/>
<polygon points="379.7,399.1 419.0,411.4 395.4,411.5" fill="#355d98" stroke="#365f9c" stroke-width="0.3"/>
<polygon points="395.4,411.5 419.0,411.4 383.6,421.7" fill="#31568c" stroke="#345b94" stroke-width="0.3"/>
<polygon points="419.0,411.4 418.3,427.4 383.6,421.7" fill="#345b94" stroke="#355e99" stroke-width="0.3"/>
<polygon points="383.6,421.7 418.3,427.4 411.8,436.4" fill="#32588f" stroke="#345b94" stroke-width="0.3"/>
<polygon points="383.6,421.7 411.8,436.4 383.9,437.6" fill="#335992" stroke="#355e9a" stroke-width="0.3"/>
<polygon points="383.9,437.6 411.8,436.4 381.2,451.5" fill="#325890" stroke="#365f9b" stroke-width="0.3"/>
<polygon points="411.8,436.4 423.7,448.8 381.2,451.5" fill="#325991" stroke="#325890" stroke-width="0.3"/>
<polygon points="381.2,451.5 423.7,448.8 418.5,467.3" fill="#355d97" stroke="#345b94" stroke-width="0.3"/>
<polygon points="381.2,451.5 418.5,467.3 383.3,470.2" fill="#31578e" stroke="#345c96" stroke-width="0.3"/>
<polygon points="423.5,256.4 430.9,259.0 408.9,274.2" fill="#31578e" stroke="#355d99" stroke-width="0.3"/>
<polygon points="430.9,259.0 447.8,271.1 408.9,274.2" fill="#355d97" stroke="#355d99" stroke-width="0.3"/>
<polygon points="408.9,274.2 447.8,271.1 444.7,286.8" fill="#345c96" stroke="#335992" stroke-width="0.3"/>
<polygon points="408.9,274.2 444.7,286.8 410.2,282.7" fill="#335a93" stroke="#335a93" stroke-width="0.3"/>
<polygon points="410.2,282.7 444.7,286.8 404.0,296.9" fill="#365e9b" stroke="#31578e" stroke-width="0.3"/>
<polygon points="444.7,286.8 432.8,298.2 404.0,296.9" fill="#365e9b" stroke="#31568d" stroke-width="0.3"/>
<polygon points="404.0,296.9 432.8,298.2 440.1,315.0" fill="#325890" stroke="#325891" stroke-width="0.3"/>
<polygon points="404.0,296.9 440.1,315.0 413.5,312.0" fill="#365f9b" stroke="#345b94" stroke-width="0.3"/>
<polygon points="413.5,312.0 440.1,315.0 408.0,326.0" fill="#335992" stroke="#365e9a" stroke-width="0.3"/>
<polygon points="440.1,315.0 446.1,328.9 408.0,326.0" fill="#325890" stroke="#335a94" stroke-width="0.3"/>
<polygon points="408.0,326.0 446.1,328.9 441.7,343.5" fill="#345b95" stroke="#355d98" stroke-width="0.3"/>
<polygon points="408.0,326.0 441.7,343.5 404.1,337.9" fill="#355d98" stroke="#345c97" stroke-width="0.3"/>
<polygon points="404.1,337.9 441.7,343.5 405.8,353.1" fill="#335992" stroke="#335992" stroke-width="0.3"/>
<polygon points="441.7,343.5 443.7,355.7 405.8,353.1" fill="#32578f" stroke="#365e9a" stroke-width="0.3"/>
<polygon points="405.8,353.1 443.7,355.7 434.6,363.8" fill="#345c97" stroke="#355d98" stroke-width="0.3"/>
<polygon points="405.8,353.1 434.6,363.8 404.8,363.7" fill="#32578f" stroke="#335a93" stroke-width="0.3"/>
<polygon points="404.8,363.7 434.6,363.8 410.1,379.6" fill="#355d99" stroke="#345b96" stroke-width="0.3"/>
<polygon points="434.6,363.8 432.7,380.7 410.1,379.6" fill="#31578e" stroke="#335a94" stroke-width="0.3"/>
<polygon points="410.1,379.6 432.7,380.7 432.1,399.0" fill="#365e9a" stroke="#325890" stroke-width="0.3"/>
<polygon points="410.1,379.6 432.1,399.0 415.7,396.3" fill="#32588f" stroke="#325991" stroke-width="0.3"/>
<polygon points="415.7,396.3 432.1,399.0 419.0,411.4" fill="#355d98" stroke="#365e9a" stroke-width="0.3"/>
<polygon points="432.1,399.0 441.2,411.1 419.0,411.4" fill="#32578f" stroke="#32578f" stroke-width="0.3"/>
<polygon points="419.0,411.4 441.2,411.1 442.5,425.6" fill="#325890" stroke="#335992" stroke-width="0.3"/>
<polygon points="419.0,411.4 442.5,425.6 418.3,427.4" fill="#345b95" stroke="#32578f" stroke-width="0.3"/>
<polygon points="418.3,427.4 442.5,425.6 411.8,436.4" fill="#335992" stroke="#32588f" stroke-width="0.3"/>
<polygon points="442.5,425.6 439.8,433.5 411.8,436.4" fill="#365f9c" stroke="#355d98" stroke-width="0.3"/>
<polygon points="411.8,436.4 439.8,433.5 446.0,454.2" fill="#31578e" stroke="#365f9c" stroke-width="0.3"/>
<polygon points="411.8,436.4 446.0,454.2 423.7,448.8" fill="#31578e" stroke="#335a92" stroke-width="0.3"/>
<polygon points="423.7,448.8 446.0,454.2 418.5,467.3" fill="#365f9c" stroke="#355e99" stroke-width="0.3"/>
<polygon points="446.0,454.2 440.1,466.3 418.5,467.3" fill="#355d98" stroke="#335a93" stroke-width="0.3"/>
<polygon points="195.0,374.0 225.0,366.0 250.0,362.0 280.0,359.0 300.0,351.0 331.0,323.0 336.0,326.0 306.0,356.0 282.0,365.0 250.0,367.0 222.0,371.0 200.0,378.0" fill="#223f6a" opacity="0.7"/>
<polygon points="219.5,299.0 273.0,290.6 281.6,285.0 236.4,304.7" fill="#25446f" opacity="0.6"/>
<polygon points="309.8,296.2 377.5,304.7 376.0,307.0 309.0,299.0" fill="#25446f" opacity="0.6"/>
<polygon points="212.4,290.6 216.7,318.8 215.3,341.3 213.0,341.0 214.0,318.0 210.0,291.0" fill="#25446f" opacity="0.25"/>
<polygon points="309.8,330.0 332.3,321.6 326.7,347.0 304.0,352.6" fill="#2c4d80" opacity="0.6"/>
<polygon points="261.8,310.3 276.0,314.5 264.6,324.4" fill="#5282c2" opacity="0.8"/>
<rect x="184" y="305" width="1" height="1" fill="#6a9ae0"/>
<rect x="197" y="314" width="1" height="1" fill="#6a9ae0"/>
<rect x="207" y="318" width="1" height="1" fill="#6a9ae0"/>
<rect x="146" y="333" width="1" height="1" fill="#6a9ae0"/>
<rect x="158" y="340" width="1" height="1" fill="#6a9ae0"/>
<rect x="190" y="364" width="1" height="1" fill="#6a9ae0"/>
<rect x="193" y="365" width="1" height="1" fill="#6a9ae0"/>
<rect x="196" y="366" width="1" height="1" fill="#6a9ae0"/>
<rect x="211" y="371" width="1" height="1" fill="#6a9ae0"/>
<rect x="214" y="372" width="1" height="1" fill="#6a9ae0"/>
<rect x="218" y="374" width="1" height="1" fill="#6a9ae0"/>
<rect x="232" y="290" width="1" height="1" fill="#6a9ae0"/>
<rect x="238" y="293" width="1" height="1" fill="#6a9ae0"/>
<rect x="244" y="296" width="1" height="1" fill="#6a9ae0"/>
<rect x="312" y="330" width="1" height="1" fill="#6a9ae0"/>
<rect x="318" y="334" width="1" height="1" fill="#6a9ae0"/>
<rect x="350" y="310" width="1" height="1" fill="#6a9ae0"/>
<rect x="360" y="316" width="1" height="1" fill="#6a9ae0"/>
<rect x="365" y="320" width="1" height="1" fill="#6a9ae0"/>
<polyline points="145.4,289.3 158.4,281.7 178.0,275.0 193.3,271.5 210.7,270.0 250.0,273.0 257.4,269.7 268.3,268.6 303.2,277.3" fill="none" stroke="#5a8cd4" stroke-width="1.0" opacity="0.6"/>
<polyline points="335.9,293.7 355.5,292.6 375.0,303.5" fill="none" stroke="#5a8cd4" stroke-width="1.0" opacity="0.6"/>
<clipPath id="cfG"><polygon points="85.0,404.0 89.8,406.8 114.7,423.7 122.0,444.2 80.0,444.0"/></clipPath>
<polygon points="85.0,404.0 89.8,406.8 114.7,423.7 122.0,444.2 80.0,444.0" fill="#4677bd" />
<g clip-path="url(#cfG)">
<polyline points="75.0,402.2 127.0,437.6" fill="none" stroke="#2a4c80" stroke-width="1.0" />
<polyline points="75.0,407.2 127.0,442.6" fill="none" stroke="#2a4c80" stroke-width="1.0" />
<polyline points="75.0,412.2 127.0,447.6" fill="none" stroke="#2a4c80" stroke-width="1.0" />
<polyline points="75.0,417.2 127.0,452.6" fill="none" stroke="#2a4c80" stroke-width="1.0" />
<polyline points="75.0,422.2 127.0,457.6" fill="none" stroke="#2a4c80" stroke-width="1.0" />
<polyline points="75.0,427.2 127.0,462.6" fill="none" stroke="#2a4c80" stroke-width="1.0" />
<polyline points="75.0,432.2 127.0,467.6" fill="none" stroke="#2a4c80" stroke-width="1.0" />
<polyline points="75.0,437.2 127.0,472.6" fill="none" stroke="#2a4c80" stroke-width="1.0" />
<polyline points="75.0,442.2 127.0,477.6" fill="none" stroke="#2a4c80" stroke-width="1.0" />
<polyline points="75.0,447.2 127.0,482.6" fill="none" stroke="#2a4c80" stroke-width="1.0" />
<polyline points="75.0,452.2 127.0,487.6" fill="none" stroke="#2a4c80" stroke-width="1.0" />
</g>
<clipPath id="cfH"><polygon points="114.7,423.7 171.2,419.6 211.2,423.7 208.0,443.5 186.8,443.9 172.6,452.0 157.3,447.1 121.4,444.2"/></clipPath>
<polygon points="114.7,423.7 171.2,419.6 211.2,423.7 208.0,443.5 186.8,443.9 172.6,452.0 157.3,447.1 121.4,444.2" fill="#5b8fd8" />
<g clip-path="url(#cfH)">
<polyline points="100.0,429.5 104.0,429.5 108.0,428.5 112.0,428.5 116.0,428.5 120.0,428.5 124.0,428.5 128.0,427.5 132.0,427.5 136.0,427.5 140.0,427.5 144.0,426.5 148.0,426.5 152.0,426.5 156.0,426.5 160.0,425.5 164.0,425.5 168.0,425.5 172.0,425.5 176.0,425.5 180.0,426.5 184.0,426.5 188.0,426.5 192.0,426.5 196.0,427.5 200.0,427.5 204.0,427.5 208.0,428.5 212.0,428.5 216.0,428.5 220.0,429.5 224.0,429.5 228.0,429.5" fill="none" stroke="#2a4c80" stroke-width="1.0" />
<polyline points="100.0,433.5 104.0,433.5 108.0,433.5 112.0,433.5 116.0,432.5 120.0,432.5 124.0,432.5 128.0,432.5 132.0,432.5 136.0,431.5 140.0,431.5 144.0,431.5 148.0,431.5 152.0,431.5 156.0,431.5 160.0,430.5 164.0,430.5 168.0,430.5 172.0,430.5 176.0,430.5 180.0,431.5 184.0,431.5 188.0,431.5 192.0,431.5 196.0,431.5 200.0,432.5 204.0,432.5 208.0,432.5 212.0,432.5 216.0,433.5 220.0,433.5 224.0,433.5 228.0,433.5" fill="none" stroke="#2a4c80" stroke-width="1.0" />
<polyline points="100.0,437.5 104.0,437.5 108.0,437.5 112.0,437.5 116.0,437.5 120.0,437.5 124.0,437.5 128.0,436.5 132.0,436.5 136.0,436.5 140.0,436.5 144.0,436.5 148.0,436.5 152.0,436.5 156.0,436.5 160.0,435.5 164.0,435.5 168.0,435.5 172.0,435.5 176.0,435.5 180.0,436.5 184.0,436.5 188.0,436.5 192.0,436.5 196.0,436.5 200.0,436.5 204.0,436.5 208.0,437.5 212.0,437.5 216.0,437.5 220.0,437.5 224.0,437.5 228.0,437.5" fill="none" stroke="#2a4c80" stroke-width="1.0" />
<polyline points="100.0,441.5 104.0,441.5 108.0,441.5 112.0,441.5 116.0,441.5 120.0,441.5 124.0,441.5 128.0,441.5 132.0,441.5 136.0,441.5 140.0,441.5 144.0,441.5 148.0,441.5 152.0,441.5 156.0,441.5 160.0,440.5 164.0,440.5 168.0,440.5 172.0,440.5 176.0,440.5 180.0,441.5 184.0,441.5 188.0,441.5 192.0,441.5 196.0,441.5 200.0,441.5 204.0,441.5 208.0,441.5 212.0,441.5 216.0,441.5 220.0,441.5 224.0,441.5 228.0,441.5" fill="none" stroke="#2a4c80" stroke-width="1.0" />
</g>
<clipPath id="cfI"><polygon points="211.2,423.7 243.0,414.5 241.5,452.0 221.6,447.0 208.0,443.5"/></clipPath>
<polygon points="211.2,423.7 243.0,414.5 241.5,452.0 221.6,447.0 208.0,443.5" fill="#3866a8" />
<g clip-path="url(#cfI)">
<polyline points="203.0,431.1 248.0,418.0" fill="none" stroke="#1c3862" stroke-width="1.0" />
<polyline points="203.0,436.1 248.0,423.0" fill="none" stroke="#1c3862" stroke-width="1.0" />
<polyline points="203.0,441.1 248.0,428.0" fill="none" stroke="#1c3862" stroke-width="1.0" />
<polyline points="203.0,446.1 248.0,433.0" fill="none" stroke="#1c3862" stroke-width="1.0" />
<polyline points="203.0,451.1 248.0,438.0" fill="none" stroke="#1c3862" stroke-width="1.0" />
<polyline points="203.0,456.1 248.0,443.0" fill="none" stroke="#1c3862" stroke-width="1.0" />
<polyline points="203.0,461.1 248.0,448.0" fill="none" stroke="#1c3862" stroke-width="1.0" />
<polyline points="203.0,466.1 248.0,453.0" fill="none" stroke="#1c3862" stroke-width="1.0" />
<polyline points="203.0,471.1 248.0,458.0" fill="none" stroke="#1c3862" stroke-width="1.0" />
<polyline points="203.0,476.1 248.0,463.0" fill="none" stroke="#1c3862" stroke-width="1.0" />
<polyline points="203.0,481.1 248.0,468.0" fill="none" stroke="#1c3862" stroke-width="1.0" />
</g>
<clipPath id="cfB"><polygon points="243.0,414.5 247.3,417.0 260.8,422.7 287.0,462.0 272.7,462.0 250.0,455.0 241.5,452.0"/></clipPath>
<polygon points="243.0,414.5 247.3,417.0 260.8,422.7 287.0,462.0 272.7,462.0 250.0,455.0 241.5,452.0" fill="#5b8fd8" />
<g clip-path="url(#cfB)">
<polyline points="236.5,416.9 292.0,438.0" fill="none" stroke="#2a4c80" stroke-width="1.0" />
<polyline points="236.5,421.8 292.0,442.9" fill="none" stroke="#2a4c80" stroke-width="1.0" />
<polyline points="236.5,426.7 292.0,447.8" fill="none" stroke="#2a4c80" stroke-width="1.0" />
<polyline points="236.5,431.6 292.0,452.7" fill="none" stroke="#2a4c80" stroke-width="1.0" />
<polyline points="236.5,436.5 292.0,457.6" fill="none" stroke="#2a4c80" stroke-width="1.0" />
<polyline points="236.5,441.4 292.0,462.5" fill="none" stroke="#2a4c80" stroke-width="1.0" />
<polyline points="236.5,446.3 292.0,467.4" fill="none" stroke="#2a4c80" stroke-width="1.0" />
<polyline points="236.5,451.2 292.0,472.3" fill="none" stroke="#2a4c80" stroke-width="1.0" />
<polyline points="236.5,456.1 292.0,477.2" fill="none" stroke="#2a4c80" stroke-width="1.0" />
<polyline points="236.5,461.0 292.0,482.1" fill="none" stroke="#2a4c80" stroke-width="1.0" />
<polyline points="236.5,465.9 292.0,487.0" fill="none" stroke="#2a4c80" stroke-width="1.0" />
</g>
<clipPath id="cfC"><polygon points="260.8,422.7 280.0,420.8 299.2,424.6 287.7,455.4 287.0,462.0"/></clipPath>
<polygon points="260.8,422.7 280.0,420.8 299.2,424.6 287.7,455.4 287.0,462.0" fill="#5b8fd8" />
<g clip-path="url(#cfC)">
<polyline points="255.8,425.4 304.2,427.9" fill="none" stroke="#2a4c80" stroke-width="1.0" />
<polyline points="255.8,430.4 304.2,432.8" fill="none" stroke="#2a4c80" stroke-width="1.0" />
<polyline points="255.8,435.2 304.2,437.7" fill="none" stroke="#2a4c80" stroke-width="1.0" />
<polyline points="255.8,440.2 304.2,442.6" fill="none" stroke="#2a4c80" stroke-width="1.0" />
<polyline points="255.8,445.1 304.2,447.5" fill="none" stroke="#2a4c80" stroke-width="1.0" />
<polyline points="255.8,449.9 304.2,452.4" fill="none" stroke="#2a4c80" stroke-width="1.0" />
<polyline points="255.8,454.9 304.2,457.3" fill="none" stroke="#2a4c80" stroke-width="1.0" />
<polyline points="255.8,459.8 304.2,462.2" fill="none" stroke="#2a4c80" stroke-width="1.0" />
<polyline points="255.8,464.7 304.2,467.1" fill="none" stroke="#2a4c80" stroke-width="1.0" />
<polyline points="255.8,469.6 304.2,472.0" fill="none" stroke="#2a4c80" stroke-width="1.0" />
<polyline points="255.8,474.5 304.2,476.9" fill="none" stroke="#2a4c80" stroke-width="1.0" />
</g>
<clipPath id="cfD"><polygon points="299.2,424.6 324.2,411.2 312.0,458.5 299.2,457.3 287.7,455.4"/></clipPath>
<polygon points="299.2,424.6 324.2,411.2 312.0,458.5 299.2,457.3 287.7,455.4" fill="#3361a0" />
<g clip-path="url(#cfD)">
<polyline points="282.7,438.4 329.2,413.3" fill="none" stroke="#1c3862" stroke-width="1.0" />
<polyline points="282.7,443.3 329.2,418.2" fill="none" stroke="#1c3862" stroke-width="1.0" />
<polyline points="282.7,448.2 329.2,423.1" fill="none" stroke="#1c3862" stroke-width="1.0" />
<polyline points="282.7,453.1 329.2,428.0" fill="none" stroke="#1c3862" stroke-width="1.0" />
<polyline points="282.7,458.0 329.2,432.9" fill="none" stroke="#1c3862" stroke-width="1.0" />
<polyline points="282.7,462.9 329.2,437.8" fill="none" stroke="#1c3862" stroke-width="1.0" />
<polyline points="282.7,467.8 329.2,442.7" fill="none" stroke="#1c3862" stroke-width="1.0" />
<polyline points="282.7,472.7 329.2,447.6" fill="none" stroke="#1c3862" stroke-width="1.0" />
<polyline points="282.7,477.6 329.2,452.5" fill="none" stroke="#1c3862" stroke-width="1.0" />
<polyline points="282.7,482.5 329.2,457.4" fill="none" stroke="#1c3862" stroke-width="1.0" />
<polyline points="282.7,487.4 329.2,462.3" fill="none" stroke="#1c3862" stroke-width="1.0" />
</g>
<clipPath id="cfE"><polygon points="324.2,411.2 333.8,411.2 322.3,461.0 312.0,458.5"/></clipPath>
<polygon points="324.2,411.2 333.8,411.2 322.3,461.0 312.0,458.5" fill="#5a8dd6" />
<g clip-path="url(#cfE)">
<polyline points="307.0,416.1 338.8,416.1" fill="none" stroke="#2a4c80" stroke-width="1.0" />
<polyline points="307.0,421.0 338.8,421.0" fill="none" stroke="#2a4c80" stroke-width="1.0" />
<polyline points="307.0,425.9 338.8,425.9" fill="none" stroke="#2a4c80" stroke-width="1.0" />
<polyline points="307.0,430.8 338.8,430.8" fill="none" stroke="#2a4c80" stroke-width="1.0" />
<polyline points="307.0,435.7 338.8,435.7" fill="none" stroke="#2a4c80" stroke-width="1.0" />
<polyline points="307.0,440.6 338.8,440.6" fill="none" stroke="#2a4c80" stroke-width="1.0" />
<polyline points="307.0,445.5 338.8,445.5" fill="none" stroke="#2a4c80" stroke-width="1.0" />
<polyline points="307.0,450.4 338.8,450.4" fill="none" stroke="#2a4c80" stroke-width="1.0" />
<polyline points="307.0,455.3 338.8,455.3" fill="none" stroke="#2a4c80" stroke-width="1.0" />
<polyline points="307.0,460.2 338.8,460.2" fill="none" stroke="#2a4c80" stroke-width="1.0" />
<polyline points="307.0,465.1 338.8,465.1" fill="none" stroke="#2a4c80" stroke-width="1.0" />
</g>
<clipPath id="cfF"><polygon points="333.8,411.2 349.0,412.0 357.0,402.5 372.3,396.7 380.0,388.0 330.0,470.0 322.3,461.0"/></clipPath>
<polygon points="333.8,411.2 349.0,412.0 357.0,402.5 372.3,396.7 380.0,388.0 330.0,470.0 322.3,461.0" fill="#3361a0" />
<g clip-path="url(#cfF)">
<polyline points="317.3,422.4 385.0,396.6" fill="none" stroke="#1c3862" stroke-width="1.0" />
<polyline points="317.3,427.3 385.0,401.5" fill="none" stroke="#1c3862" stroke-width="1.0" />
<polyline points="317.3,432.2 385.0,406.4" fill="none" stroke="#1c3862" stroke-width="1.0" />
<polyline points="317.3,437.1 385.0,411.3" fill="none" stroke="#1c3862" stroke-width="1.0" />
<polyline points="317.3,442.0 385.0,416.2" fill="none" stroke="#1c3862" stroke-width="1.0" />
<polyline points="317.3,446.9 385.0,421.1" fill="none" stroke="#1c3862" stroke-width="1.0" />
<polyline points="317.3,451.8 385.0,426.0" fill="none" stroke="#1c3862" stroke-width="1.0" />
<polyline points="317.3,456.7 385.0,430.9" fill="none" stroke="#1c3862" stroke-width="1.0" />
<polyline points="317.3,461.6 385.0,435.8" fill="none" stroke="#1c3862" stroke-width="1.0" />
<polyline points="317.3,466.5 385.0,440.7" fill="none" stroke="#1c3862" stroke-width="1.0" />
<polyline points="317.3,471.4 385.0,445.6" fill="none" stroke="#1c3862" stroke-width="1.0" />
</g>
</g>
<line x1="499" y1="59.3" x2="509.5" y2="65.3" stroke="#000" stroke-width="3"/>
<line x1="509.5" y1="65.3" x2="523" y2="59.3" stroke="#000" stroke-width="3"/>
<line x1="509.5" y1="52" x2="509.5" y2="65.3" stroke="#000" stroke-width="3"/>
<line x1="499" y1="59.3" x2="509.5" y2="65.3" stroke="#14d214" stroke-width="1.2"/>
<line x1="509.5" y1="65.3" x2="523" y2="59.3" stroke="#f01414" stroke-width="1.2"/>
<line x1="509.5" y1="52" x2="509.5" y2="65.3" stroke="#1ed2e6" stroke-width="1.2"/>
<g font-family="Liberation Sans" font-weight="bold" font-size="14.5" stroke="#000" stroke-width="2.4" paint-order="stroke" stroke-linejoin="miter">
<text x="492.8" y="60.6" fill="#14d214" textLength="9.5" lengthAdjust="spacingAndGlyphs">N</text>
<text x="507.2" y="51.5" fill="#1ed2e6" textLength="9.2" lengthAdjust="spacingAndGlyphs">Z</text>
<text x="523" y="62" fill="#f01414" textLength="9" lengthAdjust="spacingAndGlyphs">E</text>
</g>
</svg></div>
<div id="list" class="abs">
<div class="item sel" style="top:1px"><svg class="abs" style="left:3px;top:4px" width="28" height="24" viewBox="550 40 28 24">
<path d="M553.1 63.4 Q555.5 55.5 558.5 54.6 L570.7 55.9 Q572.5 57 574.7 63.4 Z" fill="url(#ggreen)"/><path d="M553.1 63.4 Q555.5 55.5 558.5 54.6 M570.7 55.9 Q572.5 57 574.7 63.4" fill="none" stroke="#505050" stroke-width="1" stroke-dasharray="1 0.8"/>
<polygon points="557.3,52.6 567.2,44.2 569.6,56.3" fill="url(#gtri)" stroke="#1a70b4" stroke-width="1.5" stroke-dasharray="3.2 0.9" stroke-linejoin="round"/>
</svg><span>Dump</span></div>
<div class="item" style="top:35px"><svg class="abs" style="left:3px;top:7px" width="28" height="22" viewBox="550 77 28 22">
<polygon points="554.5,91.9 560.8,81.3 565.5,87 557,91.9" fill="url(#gpink)"/>
<polygon points="565.5,87 568.4,84.4 573,91.9 561,91.9" fill="#90bedb"/>
<polyline points="554.5,91.9 560.8,81.3 565.5,87 568.4,84.4 573,91.9" fill="none" stroke="#1a70b4" stroke-width="1.2" stroke-dasharray="1.6 0.7"/>
<line x1="554.1" y1="92.5" x2="573.9" y2="92.5" stroke="#1a6fb0" stroke-width="1.1"/>
</svg><span>Leach Stockpile</span></div>
<div class="item" style="top:69px"><svg class="abs" style="left:3px;top:7px" width="28" height="22" viewBox="550 77 28 22">
<polygon points="554.5,91.9 560.8,81.3 565.5,87 557,91.9" fill="url(#gpink)"/>
<polygon points="565.5,87 568.4,84.4 573,91.9 561,91.9" fill="#90bedb"/>
<polyline points="554.5,91.9 560.8,81.3 565.5,87 568.4,84.4 573,91.9" fill="none" stroke="#1a70b4" stroke-width="1.2" stroke-dasharray="1.6 0.7"/>
<line x1="554.1" y1="92.5" x2="573.9" y2="92.5" stroke="#1a6fb0" stroke-width="1.1"/>
</svg><span>Mill Stockpile</span></div>
<div class="item sel" style="top:103px"><svg class="abs" style="left:3px;top:5px" width="28" height="26" viewBox="550 143 28 26">
<polygon points="553.1,157.2 574.7,157.2 570.4,165.5 557.4,165.8" fill="url(#ggray)" stroke="#505050" stroke-width="1.1" stroke-dasharray="1.2 0.7"/>
<polygon points="557.1,154.6 567.3,146 569.5,158.6" fill="url(#gtri)" stroke="#1a70b4" stroke-width="1.5" stroke-dasharray="3.2 0.9" stroke-linejoin="round"/>
</svg><span>Stage 1 Short Term</span></div>
</div>
<div class="btn" style="left:70px;width:75px">Cancel</div>
<div class="btn" style="left:709px;width:65px">Next</div>
<div id="strip" class="abs"></div>
<div class="abs" style="left:0;top:0;width:1px;height:589px;background:#1a1a1a"></div>
<div class="abs" style="left:778px;top:0;width:2px;height:589px;background:#1a1a1a"></div>
<div class="abs" style="left:0;top:588px;width:780px;height:1px;background:#1a1a1a"></div>
</div>
</body></html>
